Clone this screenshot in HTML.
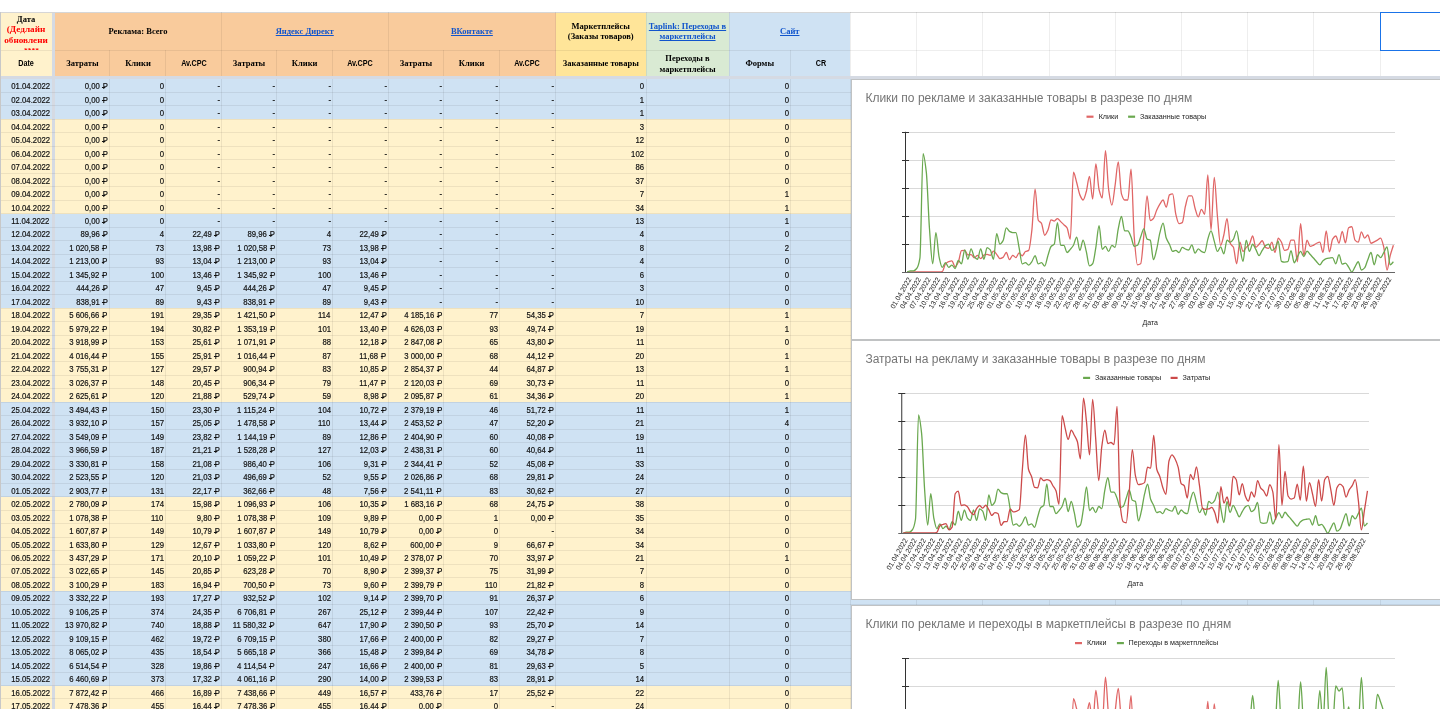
<!DOCTYPE html>
<html><head><meta charset="utf-8"><style>
*{margin:0;padding:0;box-sizing:border-box}
html,body{width:1440px;height:720px;overflow:hidden;background:#fff}
body{position:relative;font-family:"Liberation Sans",sans-serif}
.t{position:absolute;white-space:nowrap;font-size:9px;line-height:10px;color:#111;-webkit-text-stroke:0.2px #111;transform:scaleX(0.86);transform-origin:100% 50%}
.hs{position:absolute;white-space:nowrap;font-family:"Liberation Serif",serif;font-weight:bold;font-size:8.5px;line-height:10.5px;color:#000;text-align:center}
.hb{position:absolute;white-space:nowrap;font-family:"Liberation Sans",sans-serif;font-weight:bold;font-size:9px;line-height:10.5px;color:#000;text-align:center;transform:scaleX(0.8)}
.lk{color:#1155cc;text-decoration:underline;text-decoration-skip-ink:none}
.gl{position:absolute;background:rgba(0,0,0,0.065)}
.rb{position:relative;margin-left:0.8px}.rb:after{content:'';position:absolute;left:-0.4px;width:3.4px;top:5.5px;height:0.75px;background:#111}</style></head>
<body>
<div style="position:absolute;left:0px;top:12px;width:52px;height:38px;background:#fff2cc"></div><div style="position:absolute;left:55px;top:12px;width:166px;height:38px;background:#f9cb9c"></div><div style="position:absolute;left:221px;top:12px;width:167px;height:38px;background:#f9cb9c"></div><div style="position:absolute;left:388px;top:12px;width:168px;height:38px;background:#f9cb9c"></div><div style="position:absolute;left:556px;top:12px;width:90px;height:38px;background:#ffe599"></div><div style="position:absolute;left:646px;top:12px;width:83px;height:38px;background:#d9ead3"></div><div style="position:absolute;left:729px;top:12px;width:121px;height:38px;background:#cfe2f3"></div><div style="position:absolute;left:0px;top:50px;width:52px;height:26px;background:#fff2cc"></div><div style="position:absolute;left:55px;top:50px;width:501px;height:26px;background:#f9cb9c"></div><div style="position:absolute;left:556px;top:50px;width:90px;height:26px;background:#ffe599"></div><div style="position:absolute;left:646px;top:50px;width:83px;height:26px;background:#d9ead3"></div><div style="position:absolute;left:729px;top:50px;width:121px;height:26px;background:#cfe2f3"></div><div style="position:absolute;left:0px;top:79px;width:52px;height:13px;background:#cfe2f3"></div><div style="position:absolute;left:55px;top:79px;width:1385px;height:13px;background:#cfe2f3"></div><div style="position:absolute;left:0px;top:92px;width:52px;height:14px;background:#cfe2f3"></div><div style="position:absolute;left:55px;top:92px;width:1385px;height:14px;background:#cfe2f3"></div><div style="position:absolute;left:0px;top:106px;width:52px;height:13px;background:#cfe2f3"></div><div style="position:absolute;left:55px;top:106px;width:1385px;height:13px;background:#cfe2f3"></div><div style="position:absolute;left:0px;top:119px;width:52px;height:14px;background:#fff2cc"></div><div style="position:absolute;left:55px;top:119px;width:1385px;height:14px;background:#fff2cc"></div><div style="position:absolute;left:0px;top:133px;width:52px;height:13px;background:#fff2cc"></div><div style="position:absolute;left:55px;top:133px;width:1385px;height:13px;background:#fff2cc"></div><div style="position:absolute;left:0px;top:146px;width:52px;height:14px;background:#fff2cc"></div><div style="position:absolute;left:55px;top:146px;width:1385px;height:14px;background:#fff2cc"></div><div style="position:absolute;left:0px;top:160px;width:52px;height:13px;background:#fff2cc"></div><div style="position:absolute;left:55px;top:160px;width:1385px;height:13px;background:#fff2cc"></div><div style="position:absolute;left:0px;top:173px;width:52px;height:14px;background:#fff2cc"></div><div style="position:absolute;left:55px;top:173px;width:1385px;height:14px;background:#fff2cc"></div><div style="position:absolute;left:0px;top:187px;width:52px;height:13px;background:#fff2cc"></div><div style="position:absolute;left:55px;top:187px;width:1385px;height:13px;background:#fff2cc"></div><div style="position:absolute;left:0px;top:200px;width:52px;height:14px;background:#fff2cc"></div><div style="position:absolute;left:55px;top:200px;width:1385px;height:14px;background:#fff2cc"></div><div style="position:absolute;left:0px;top:214px;width:52px;height:13px;background:#cfe2f3"></div><div style="position:absolute;left:55px;top:214px;width:1385px;height:13px;background:#cfe2f3"></div><div style="position:absolute;left:0px;top:227px;width:52px;height:14px;background:#cfe2f3"></div><div style="position:absolute;left:55px;top:227px;width:1385px;height:14px;background:#cfe2f3"></div><div style="position:absolute;left:0px;top:241px;width:52px;height:13px;background:#cfe2f3"></div><div style="position:absolute;left:55px;top:241px;width:1385px;height:13px;background:#cfe2f3"></div><div style="position:absolute;left:0px;top:254px;width:52px;height:14px;background:#cfe2f3"></div><div style="position:absolute;left:55px;top:254px;width:1385px;height:14px;background:#cfe2f3"></div><div style="position:absolute;left:0px;top:268px;width:52px;height:13px;background:#cfe2f3"></div><div style="position:absolute;left:55px;top:268px;width:1385px;height:13px;background:#cfe2f3"></div><div style="position:absolute;left:0px;top:281px;width:52px;height:14px;background:#cfe2f3"></div><div style="position:absolute;left:55px;top:281px;width:1385px;height:14px;background:#cfe2f3"></div><div style="position:absolute;left:0px;top:295px;width:52px;height:13px;background:#cfe2f3"></div><div style="position:absolute;left:55px;top:295px;width:1385px;height:13px;background:#cfe2f3"></div><div style="position:absolute;left:0px;top:308px;width:52px;height:14px;background:#fff2cc"></div><div style="position:absolute;left:55px;top:308px;width:1385px;height:14px;background:#fff2cc"></div><div style="position:absolute;left:0px;top:322px;width:52px;height:13px;background:#fff2cc"></div><div style="position:absolute;left:55px;top:322px;width:1385px;height:13px;background:#fff2cc"></div><div style="position:absolute;left:0px;top:335px;width:52px;height:13px;background:#fff2cc"></div><div style="position:absolute;left:55px;top:335px;width:1385px;height:13px;background:#fff2cc"></div><div style="position:absolute;left:0px;top:348px;width:52px;height:14px;background:#fff2cc"></div><div style="position:absolute;left:55px;top:348px;width:1385px;height:14px;background:#fff2cc"></div><div style="position:absolute;left:0px;top:362px;width:52px;height:13px;background:#fff2cc"></div><div style="position:absolute;left:55px;top:362px;width:1385px;height:13px;background:#fff2cc"></div><div style="position:absolute;left:0px;top:375px;width:52px;height:14px;background:#fff2cc"></div><div style="position:absolute;left:55px;top:375px;width:1385px;height:14px;background:#fff2cc"></div><div style="position:absolute;left:0px;top:389px;width:52px;height:13px;background:#fff2cc"></div><div style="position:absolute;left:55px;top:389px;width:1385px;height:13px;background:#fff2cc"></div><div style="position:absolute;left:0px;top:402px;width:52px;height:14px;background:#cfe2f3"></div><div style="position:absolute;left:55px;top:402px;width:1385px;height:14px;background:#cfe2f3"></div><div style="position:absolute;left:0px;top:416px;width:52px;height:13px;background:#cfe2f3"></div><div style="position:absolute;left:55px;top:416px;width:1385px;height:13px;background:#cfe2f3"></div><div style="position:absolute;left:0px;top:429px;width:52px;height:14px;background:#cfe2f3"></div><div style="position:absolute;left:55px;top:429px;width:1385px;height:14px;background:#cfe2f3"></div><div style="position:absolute;left:0px;top:443px;width:52px;height:13px;background:#cfe2f3"></div><div style="position:absolute;left:55px;top:443px;width:1385px;height:13px;background:#cfe2f3"></div><div style="position:absolute;left:0px;top:456px;width:52px;height:14px;background:#cfe2f3"></div><div style="position:absolute;left:55px;top:456px;width:1385px;height:14px;background:#cfe2f3"></div><div style="position:absolute;left:0px;top:470px;width:52px;height:13px;background:#cfe2f3"></div><div style="position:absolute;left:55px;top:470px;width:1385px;height:13px;background:#cfe2f3"></div><div style="position:absolute;left:0px;top:483px;width:52px;height:14px;background:#cfe2f3"></div><div style="position:absolute;left:55px;top:483px;width:1385px;height:14px;background:#cfe2f3"></div><div style="position:absolute;left:0px;top:497px;width:52px;height:13px;background:#fff2cc"></div><div style="position:absolute;left:55px;top:497px;width:1385px;height:13px;background:#fff2cc"></div><div style="position:absolute;left:0px;top:510px;width:52px;height:14px;background:#fff2cc"></div><div style="position:absolute;left:55px;top:510px;width:1385px;height:14px;background:#fff2cc"></div><div style="position:absolute;left:0px;top:524px;width:52px;height:13px;background:#fff2cc"></div><div style="position:absolute;left:55px;top:524px;width:1385px;height:13px;background:#fff2cc"></div><div style="position:absolute;left:0px;top:537px;width:52px;height:14px;background:#fff2cc"></div><div style="position:absolute;left:55px;top:537px;width:1385px;height:14px;background:#fff2cc"></div><div style="position:absolute;left:0px;top:551px;width:52px;height:13px;background:#fff2cc"></div><div style="position:absolute;left:55px;top:551px;width:1385px;height:13px;background:#fff2cc"></div><div style="position:absolute;left:0px;top:564px;width:52px;height:14px;background:#fff2cc"></div><div style="position:absolute;left:55px;top:564px;width:1385px;height:14px;background:#fff2cc"></div><div style="position:absolute;left:0px;top:578px;width:52px;height:13px;background:#fff2cc"></div><div style="position:absolute;left:55px;top:578px;width:1385px;height:13px;background:#fff2cc"></div><div style="position:absolute;left:0px;top:591px;width:52px;height:14px;background:#cfe2f3"></div><div style="position:absolute;left:55px;top:591px;width:1385px;height:14px;background:#cfe2f3"></div><div style="position:absolute;left:0px;top:605px;width:52px;height:13px;background:#cfe2f3"></div><div style="position:absolute;left:55px;top:605px;width:1385px;height:13px;background:#cfe2f3"></div><div style="position:absolute;left:0px;top:618px;width:52px;height:14px;background:#cfe2f3"></div><div style="position:absolute;left:55px;top:618px;width:1385px;height:14px;background:#cfe2f3"></div><div style="position:absolute;left:0px;top:632px;width:52px;height:13px;background:#cfe2f3"></div><div style="position:absolute;left:55px;top:632px;width:1385px;height:13px;background:#cfe2f3"></div><div style="position:absolute;left:0px;top:645px;width:52px;height:14px;background:#cfe2f3"></div><div style="position:absolute;left:55px;top:645px;width:1385px;height:14px;background:#cfe2f3"></div><div style="position:absolute;left:0px;top:659px;width:52px;height:13px;background:#cfe2f3"></div><div style="position:absolute;left:55px;top:659px;width:1385px;height:13px;background:#cfe2f3"></div><div style="position:absolute;left:0px;top:672px;width:52px;height:14px;background:#cfe2f3"></div><div style="position:absolute;left:55px;top:672px;width:1385px;height:14px;background:#cfe2f3"></div><div style="position:absolute;left:0px;top:686px;width:52px;height:13px;background:#fff2cc"></div><div style="position:absolute;left:55px;top:686px;width:1385px;height:13px;background:#fff2cc"></div><div style="position:absolute;left:0px;top:699px;width:52px;height:10px;background:#fff2cc"></div><div style="position:absolute;left:55px;top:699px;width:1385px;height:10px;background:#fff2cc"></div><div style="position:absolute;left:52px;top:12px;width:3px;height:697px;background:#d5dae3"></div><div style="position:absolute;left:0px;top:76px;width:1440px;height:3px;background:#d5dae3"></div><div class="gl" style="left:0;top:11.50px;width:1440px;height:1px;background:#d6d6d6"></div><div class="gl" style="left:0;top:49.90px;width:51.9px;height:1px"></div><div class="gl" style="left:54.6px;top:49.90px;width:1386px;height:1px"></div><div class="gl" style="left:0;top:91.88px;width:1440px;height:1px"></div><div class="gl" style="left:0;top:105.36px;width:1440px;height:1px"></div><div class="gl" style="left:0;top:118.84px;width:1440px;height:1px"></div><div class="gl" style="left:0;top:132.32px;width:1440px;height:1px"></div><div class="gl" style="left:0;top:145.80px;width:1440px;height:1px"></div><div class="gl" style="left:0;top:159.28px;width:1440px;height:1px"></div><div class="gl" style="left:0;top:172.76px;width:1440px;height:1px"></div><div class="gl" style="left:0;top:186.24px;width:1440px;height:1px"></div><div class="gl" style="left:0;top:199.72px;width:1440px;height:1px"></div><div class="gl" style="left:0;top:213.20px;width:1440px;height:1px"></div><div class="gl" style="left:0;top:226.68px;width:1440px;height:1px"></div><div class="gl" style="left:0;top:240.16px;width:1440px;height:1px"></div><div class="gl" style="left:0;top:253.64px;width:1440px;height:1px"></div><div class="gl" style="left:0;top:267.12px;width:1440px;height:1px"></div><div class="gl" style="left:0;top:280.60px;width:1440px;height:1px"></div><div class="gl" style="left:0;top:294.08px;width:1440px;height:1px"></div><div class="gl" style="left:0;top:307.56px;width:1440px;height:1px"></div><div class="gl" style="left:0;top:321.04px;width:1440px;height:1px"></div><div class="gl" style="left:0;top:334.52px;width:1440px;height:1px"></div><div class="gl" style="left:0;top:348.00px;width:1440px;height:1px"></div><div class="gl" style="left:0;top:361.48px;width:1440px;height:1px"></div><div class="gl" style="left:0;top:374.96px;width:1440px;height:1px"></div><div class="gl" style="left:0;top:388.44px;width:1440px;height:1px"></div><div class="gl" style="left:0;top:401.92px;width:1440px;height:1px"></div><div class="gl" style="left:0;top:415.40px;width:1440px;height:1px"></div><div class="gl" style="left:0;top:428.88px;width:1440px;height:1px"></div><div class="gl" style="left:0;top:442.36px;width:1440px;height:1px"></div><div class="gl" style="left:0;top:455.84px;width:1440px;height:1px"></div><div class="gl" style="left:0;top:469.32px;width:1440px;height:1px"></div><div class="gl" style="left:0;top:482.80px;width:1440px;height:1px"></div><div class="gl" style="left:0;top:496.28px;width:1440px;height:1px"></div><div class="gl" style="left:0;top:509.76px;width:1440px;height:1px"></div><div class="gl" style="left:0;top:523.24px;width:1440px;height:1px"></div><div class="gl" style="left:0;top:536.72px;width:1440px;height:1px"></div><div class="gl" style="left:0;top:550.20px;width:1440px;height:1px"></div><div class="gl" style="left:0;top:563.68px;width:1440px;height:1px"></div><div class="gl" style="left:0;top:577.16px;width:1440px;height:1px"></div><div class="gl" style="left:0;top:590.64px;width:1440px;height:1px"></div><div class="gl" style="left:0;top:604.12px;width:1440px;height:1px"></div><div class="gl" style="left:0;top:617.60px;width:1440px;height:1px"></div><div class="gl" style="left:0;top:631.08px;width:1440px;height:1px"></div><div class="gl" style="left:0;top:644.56px;width:1440px;height:1px"></div><div class="gl" style="left:0;top:658.04px;width:1440px;height:1px"></div><div class="gl" style="left:0;top:671.52px;width:1440px;height:1px"></div><div class="gl" style="left:0;top:685.00px;width:1440px;height:1px"></div><div class="gl" style="left:0;top:698.48px;width:1440px;height:1px"></div><div class="gl" style="left:220.75px;top:12.00px;width:1px;height:38.40px"></div><div class="gl" style="left:387.75px;top:12.00px;width:1px;height:38.40px"></div><div class="gl" style="left:555.00px;top:12.00px;width:1px;height:38.40px"></div><div class="gl" style="left:645.50px;top:12.00px;width:1px;height:38.40px"></div><div class="gl" style="left:728.50px;top:12.00px;width:1px;height:38.40px"></div><div class="gl" style="left:850.00px;top:12.00px;width:1px;height:38.40px"></div><div class="gl" style="left:916.20px;top:12.00px;width:1px;height:38.40px"></div><div class="gl" style="left:982.40px;top:12.00px;width:1px;height:38.40px"></div><div class="gl" style="left:1048.60px;top:12.00px;width:1px;height:38.40px"></div><div class="gl" style="left:1114.80px;top:12.00px;width:1px;height:38.40px"></div><div class="gl" style="left:1181.00px;top:12.00px;width:1px;height:38.40px"></div><div class="gl" style="left:1247.20px;top:12.00px;width:1px;height:38.40px"></div><div class="gl" style="left:1313.40px;top:12.00px;width:1px;height:38.40px"></div><div class="gl" style="left:1379.60px;top:12.00px;width:1px;height:38.40px"></div><div class="gl" style="left:1445.80px;top:12.00px;width:1px;height:38.40px"></div><div class="gl" style="left:108.90px;top:50.40px;width:1px;height:26.10px"></div><div class="gl" style="left:108.90px;top:78.90px;width:1px;height:629.85px"></div><div class="gl" style="left:165.20px;top:50.40px;width:1px;height:26.10px"></div><div class="gl" style="left:165.20px;top:78.90px;width:1px;height:629.85px"></div><div class="gl" style="left:220.75px;top:50.40px;width:1px;height:26.10px"></div><div class="gl" style="left:220.75px;top:78.90px;width:1px;height:629.85px"></div><div class="gl" style="left:276.25px;top:50.40px;width:1px;height:26.10px"></div><div class="gl" style="left:276.25px;top:78.90px;width:1px;height:629.85px"></div><div class="gl" style="left:332.00px;top:50.40px;width:1px;height:26.10px"></div><div class="gl" style="left:332.00px;top:78.90px;width:1px;height:629.85px"></div><div class="gl" style="left:387.75px;top:50.40px;width:1px;height:26.10px"></div><div class="gl" style="left:387.75px;top:78.90px;width:1px;height:629.85px"></div><div class="gl" style="left:443.25px;top:50.40px;width:1px;height:26.10px"></div><div class="gl" style="left:443.25px;top:78.90px;width:1px;height:629.85px"></div><div class="gl" style="left:499.00px;top:50.40px;width:1px;height:26.10px"></div><div class="gl" style="left:499.00px;top:78.90px;width:1px;height:629.85px"></div><div class="gl" style="left:555.00px;top:50.40px;width:1px;height:26.10px"></div><div class="gl" style="left:555.00px;top:78.90px;width:1px;height:629.85px"></div><div class="gl" style="left:645.50px;top:50.40px;width:1px;height:26.10px"></div><div class="gl" style="left:645.50px;top:78.90px;width:1px;height:629.85px"></div><div class="gl" style="left:728.50px;top:50.40px;width:1px;height:26.10px"></div><div class="gl" style="left:728.50px;top:78.90px;width:1px;height:629.85px"></div><div class="gl" style="left:790.00px;top:50.40px;width:1px;height:26.10px"></div><div class="gl" style="left:790.00px;top:78.90px;width:1px;height:629.85px"></div><div class="gl" style="left:850.00px;top:50.40px;width:1px;height:26.10px"></div><div class="gl" style="left:850.00px;top:78.90px;width:1px;height:629.85px"></div><div class="gl" style="left:916.20px;top:50.40px;width:1px;height:26.10px"></div><div class="gl" style="left:916.20px;top:78.90px;width:1px;height:629.85px"></div><div class="gl" style="left:982.40px;top:50.40px;width:1px;height:26.10px"></div><div class="gl" style="left:982.40px;top:78.90px;width:1px;height:629.85px"></div><div class="gl" style="left:1048.60px;top:50.40px;width:1px;height:26.10px"></div><div class="gl" style="left:1048.60px;top:78.90px;width:1px;height:629.85px"></div><div class="gl" style="left:1114.80px;top:50.40px;width:1px;height:26.10px"></div><div class="gl" style="left:1114.80px;top:78.90px;width:1px;height:629.85px"></div><div class="gl" style="left:1181.00px;top:50.40px;width:1px;height:26.10px"></div><div class="gl" style="left:1181.00px;top:78.90px;width:1px;height:629.85px"></div><div class="gl" style="left:1247.20px;top:50.40px;width:1px;height:26.10px"></div><div class="gl" style="left:1247.20px;top:78.90px;width:1px;height:629.85px"></div><div class="gl" style="left:1313.40px;top:50.40px;width:1px;height:26.10px"></div><div class="gl" style="left:1313.40px;top:78.90px;width:1px;height:629.85px"></div><div class="gl" style="left:1379.60px;top:50.40px;width:1px;height:26.10px"></div><div class="gl" style="left:1379.60px;top:78.90px;width:1px;height:629.85px"></div><div class="gl" style="left:1445.80px;top:50.40px;width:1px;height:26.10px"></div><div class="gl" style="left:1445.80px;top:78.90px;width:1px;height:629.85px"></div><div class="gl" style="left:0;top:12.00px;width:1px;height:696.75px;background:#c8c8c8"></div><div style="position:absolute;left:1379.9px;top:11.9px;width:80px;height:38.9px;border:1.4px solid #1a73e8"></div><div style="position:absolute;left:0;top:0;width:1440px;height:720px;will-change:transform"><div class="hs" style="left:-74.00px;top:14.25px;width:200px;">Дата</div><div class="hs" style="left:-74px;top:23.9px;width:200px;color:#ff0000;font-size:9.2px;line-height:11.4px;height:26.5px;overflow:hidden">(Дедлайн<br>обновлени</div><div style="position:absolute;left:0;top:44px;width:52px;height:6.4px;overflow:hidden"><div class="hs" style="left:-68.5px;top:2.6px;width:200px;color:#ff0000;font-size:7.5px;line-height:10px">****</div></div><div class="hs" style="left:38.00px;top:25.95px;width:200px;">Реклама: Всего</div><div class="hs" style="left:204.75px;top:25.95px;width:200px;"><span class="lk">Яндекс Директ</span></div><div class="hs" style="left:371.90px;top:25.95px;width:200px;"><span class="lk">ВКонтакте</span></div><div class="hs" style="left:500.75px;top:20.95px;width:200px;">Маркетплейсы</div><div class="hs" style="left:500.75px;top:31.25px;width:200px;">(Заказы товаров)</div><div class="hs" style="left:587.50px;top:20.95px;width:200px;"><span class="lk">Taplink: Переходы в</span></div><div class="hs" style="left:587.50px;top:31.25px;width:200px;"><span class="lk">маркетплейсы</span></div><div class="hs" style="left:689.75px;top:25.95px;width:200px;"><span class="lk">Сайт</span></div><div class="hb" style="left:-74.00px;top:58.25px;width:200px;">Date</div><div class="hs" style="left:-17.60px;top:58.25px;width:200px;">Затраты</div><div class="hs" style="left:38.00px;top:58.25px;width:200px;">Клики</div><div class="hb" style="left:93.60px;top:58.25px;width:200px;">Av.CPC</div><div class="hs" style="left:149.05px;top:58.25px;width:200px;">Затраты</div><div class="hs" style="left:204.65px;top:58.25px;width:200px;">Клики</div><div class="hb" style="left:260.25px;top:58.25px;width:200px;">Av.CPC</div><div class="hs" style="left:316.05px;top:58.25px;width:200px;">Затраты</div><div class="hs" style="left:371.65px;top:58.25px;width:200px;">Клики</div><div class="hb" style="left:427.25px;top:58.25px;width:200px;">Av.CPC</div><div class="hs" style="left:500.75px;top:58.25px;width:200px;">Заказанные товары</div><div class="hs" style="left:587.50px;top:53.25px;width:200px;">Переходы в</div><div class="hs" style="left:587.50px;top:63.55px;width:200px;">маркетплейсы</div><div class="hs" style="left:659.75px;top:58.25px;width:200px;">Формы</div><div class="hb" style="left:720.50px;top:58.25px;width:200px;">CR</div><div class="t" style="right:1390.40px;top:81.20px">01.04.2022</div><div class="t" style="right:1332.40px;top:81.20px">0,00 <span class="rb">Р</span></div><div class="t" style="right:1276.40px;top:81.20px">0</div><div class="t" style="right:1220.50px;top:81.20px">-</div><div class="t" style="right:1165.00px;top:81.20px">-</div><div class="t" style="right:1109.20px;top:81.20px">-</div><div class="t" style="right:1053.50px;top:81.20px">-</div><div class="t" style="right:998.00px;top:81.20px">-</div><div class="t" style="right:942.40px;top:81.20px">-</div><div class="t" style="right:886.40px;top:81.20px">-</div><div class="t" style="right:795.80px;top:81.20px">0</div><div class="t" style="right:651.40px;top:81.20px">0</div><div class="t" style="right:1390.40px;top:94.68px">02.04.2022</div><div class="t" style="right:1332.40px;top:94.68px">0,00 <span class="rb">Р</span></div><div class="t" style="right:1276.40px;top:94.68px">0</div><div class="t" style="right:1220.50px;top:94.68px">-</div><div class="t" style="right:1165.00px;top:94.68px">-</div><div class="t" style="right:1109.20px;top:94.68px">-</div><div class="t" style="right:1053.50px;top:94.68px">-</div><div class="t" style="right:998.00px;top:94.68px">-</div><div class="t" style="right:942.40px;top:94.68px">-</div><div class="t" style="right:886.40px;top:94.68px">-</div><div class="t" style="right:795.80px;top:94.68px">1</div><div class="t" style="right:651.40px;top:94.68px">0</div><div class="t" style="right:1390.40px;top:108.16px">03.04.2022</div><div class="t" style="right:1332.40px;top:108.16px">0,00 <span class="rb">Р</span></div><div class="t" style="right:1276.40px;top:108.16px">0</div><div class="t" style="right:1220.50px;top:108.16px">-</div><div class="t" style="right:1165.00px;top:108.16px">-</div><div class="t" style="right:1109.20px;top:108.16px">-</div><div class="t" style="right:1053.50px;top:108.16px">-</div><div class="t" style="right:998.00px;top:108.16px">-</div><div class="t" style="right:942.40px;top:108.16px">-</div><div class="t" style="right:886.40px;top:108.16px">-</div><div class="t" style="right:795.80px;top:108.16px">1</div><div class="t" style="right:651.40px;top:108.16px">0</div><div class="t" style="right:1390.40px;top:121.64px">04.04.2022</div><div class="t" style="right:1332.40px;top:121.64px">0,00 <span class="rb">Р</span></div><div class="t" style="right:1276.40px;top:121.64px">0</div><div class="t" style="right:1220.50px;top:121.64px">-</div><div class="t" style="right:1165.00px;top:121.64px">-</div><div class="t" style="right:1109.20px;top:121.64px">-</div><div class="t" style="right:1053.50px;top:121.64px">-</div><div class="t" style="right:998.00px;top:121.64px">-</div><div class="t" style="right:942.40px;top:121.64px">-</div><div class="t" style="right:886.40px;top:121.64px">-</div><div class="t" style="right:795.80px;top:121.64px">3</div><div class="t" style="right:651.40px;top:121.64px">0</div><div class="t" style="right:1390.40px;top:135.12px">05.04.2022</div><div class="t" style="right:1332.40px;top:135.12px">0,00 <span class="rb">Р</span></div><div class="t" style="right:1276.40px;top:135.12px">0</div><div class="t" style="right:1220.50px;top:135.12px">-</div><div class="t" style="right:1165.00px;top:135.12px">-</div><div class="t" style="right:1109.20px;top:135.12px">-</div><div class="t" style="right:1053.50px;top:135.12px">-</div><div class="t" style="right:998.00px;top:135.12px">-</div><div class="t" style="right:942.40px;top:135.12px">-</div><div class="t" style="right:886.40px;top:135.12px">-</div><div class="t" style="right:795.80px;top:135.12px">12</div><div class="t" style="right:651.40px;top:135.12px">0</div><div class="t" style="right:1390.40px;top:148.60px">06.04.2022</div><div class="t" style="right:1332.40px;top:148.60px">0,00 <span class="rb">Р</span></div><div class="t" style="right:1276.40px;top:148.60px">0</div><div class="t" style="right:1220.50px;top:148.60px">-</div><div class="t" style="right:1165.00px;top:148.60px">-</div><div class="t" style="right:1109.20px;top:148.60px">-</div><div class="t" style="right:1053.50px;top:148.60px">-</div><div class="t" style="right:998.00px;top:148.60px">-</div><div class="t" style="right:942.40px;top:148.60px">-</div><div class="t" style="right:886.40px;top:148.60px">-</div><div class="t" style="right:795.80px;top:148.60px">102</div><div class="t" style="right:651.40px;top:148.60px">0</div><div class="t" style="right:1390.40px;top:162.08px">07.04.2022</div><div class="t" style="right:1332.40px;top:162.08px">0,00 <span class="rb">Р</span></div><div class="t" style="right:1276.40px;top:162.08px">0</div><div class="t" style="right:1220.50px;top:162.08px">-</div><div class="t" style="right:1165.00px;top:162.08px">-</div><div class="t" style="right:1109.20px;top:162.08px">-</div><div class="t" style="right:1053.50px;top:162.08px">-</div><div class="t" style="right:998.00px;top:162.08px">-</div><div class="t" style="right:942.40px;top:162.08px">-</div><div class="t" style="right:886.40px;top:162.08px">-</div><div class="t" style="right:795.80px;top:162.08px">86</div><div class="t" style="right:651.40px;top:162.08px">0</div><div class="t" style="right:1390.40px;top:175.56px">08.04.2022</div><div class="t" style="right:1332.40px;top:175.56px">0,00 <span class="rb">Р</span></div><div class="t" style="right:1276.40px;top:175.56px">0</div><div class="t" style="right:1220.50px;top:175.56px">-</div><div class="t" style="right:1165.00px;top:175.56px">-</div><div class="t" style="right:1109.20px;top:175.56px">-</div><div class="t" style="right:1053.50px;top:175.56px">-</div><div class="t" style="right:998.00px;top:175.56px">-</div><div class="t" style="right:942.40px;top:175.56px">-</div><div class="t" style="right:886.40px;top:175.56px">-</div><div class="t" style="right:795.80px;top:175.56px">37</div><div class="t" style="right:651.40px;top:175.56px">0</div><div class="t" style="right:1390.40px;top:189.04px">09.04.2022</div><div class="t" style="right:1332.40px;top:189.04px">0,00 <span class="rb">Р</span></div><div class="t" style="right:1276.40px;top:189.04px">0</div><div class="t" style="right:1220.50px;top:189.04px">-</div><div class="t" style="right:1165.00px;top:189.04px">-</div><div class="t" style="right:1109.20px;top:189.04px">-</div><div class="t" style="right:1053.50px;top:189.04px">-</div><div class="t" style="right:998.00px;top:189.04px">-</div><div class="t" style="right:942.40px;top:189.04px">-</div><div class="t" style="right:886.40px;top:189.04px">-</div><div class="t" style="right:795.80px;top:189.04px">7</div><div class="t" style="right:651.40px;top:189.04px">1</div><div class="t" style="right:1390.40px;top:202.52px">10.04.2022</div><div class="t" style="right:1332.40px;top:202.52px">0,00 <span class="rb">Р</span></div><div class="t" style="right:1276.40px;top:202.52px">0</div><div class="t" style="right:1220.50px;top:202.52px">-</div><div class="t" style="right:1165.00px;top:202.52px">-</div><div class="t" style="right:1109.20px;top:202.52px">-</div><div class="t" style="right:1053.50px;top:202.52px">-</div><div class="t" style="right:998.00px;top:202.52px">-</div><div class="t" style="right:942.40px;top:202.52px">-</div><div class="t" style="right:886.40px;top:202.52px">-</div><div class="t" style="right:795.80px;top:202.52px">34</div><div class="t" style="right:651.40px;top:202.52px">1</div><div class="t" style="right:1390.40px;top:216.00px">11.04.2022</div><div class="t" style="right:1332.40px;top:216.00px">0,00 <span class="rb">Р</span></div><div class="t" style="right:1276.40px;top:216.00px">0</div><div class="t" style="right:1220.50px;top:216.00px">-</div><div class="t" style="right:1165.00px;top:216.00px">-</div><div class="t" style="right:1109.20px;top:216.00px">-</div><div class="t" style="right:1053.50px;top:216.00px">-</div><div class="t" style="right:998.00px;top:216.00px">-</div><div class="t" style="right:942.40px;top:216.00px">-</div><div class="t" style="right:886.40px;top:216.00px">-</div><div class="t" style="right:795.80px;top:216.00px">13</div><div class="t" style="right:651.40px;top:216.00px">1</div><div class="t" style="right:1390.40px;top:229.48px">12.04.2022</div><div class="t" style="right:1332.40px;top:229.48px">89,96 <span class="rb">Р</span></div><div class="t" style="right:1276.40px;top:229.48px">4</div><div class="t" style="right:1220.50px;top:229.48px">22,49 <span class="rb">Р</span></div><div class="t" style="right:1165.00px;top:229.48px">89,96 <span class="rb">Р</span></div><div class="t" style="right:1109.20px;top:229.48px">4</div><div class="t" style="right:1053.50px;top:229.48px">22,49 <span class="rb">Р</span></div><div class="t" style="right:998.00px;top:229.48px">-</div><div class="t" style="right:942.40px;top:229.48px">-</div><div class="t" style="right:886.40px;top:229.48px">-</div><div class="t" style="right:795.80px;top:229.48px">4</div><div class="t" style="right:651.40px;top:229.48px">0</div><div class="t" style="right:1390.40px;top:242.96px">13.04.2022</div><div class="t" style="right:1332.40px;top:242.96px">1 020,58 <span class="rb">Р</span></div><div class="t" style="right:1276.40px;top:242.96px">73</div><div class="t" style="right:1220.50px;top:242.96px">13,98 <span class="rb">Р</span></div><div class="t" style="right:1165.00px;top:242.96px">1 020,58 <span class="rb">Р</span></div><div class="t" style="right:1109.20px;top:242.96px">73</div><div class="t" style="right:1053.50px;top:242.96px">13,98 <span class="rb">Р</span></div><div class="t" style="right:998.00px;top:242.96px">-</div><div class="t" style="right:942.40px;top:242.96px">-</div><div class="t" style="right:886.40px;top:242.96px">-</div><div class="t" style="right:795.80px;top:242.96px">8</div><div class="t" style="right:651.40px;top:242.96px">2</div><div class="t" style="right:1390.40px;top:256.44px">14.04.2022</div><div class="t" style="right:1332.40px;top:256.44px">1 213,00 <span class="rb">Р</span></div><div class="t" style="right:1276.40px;top:256.44px">93</div><div class="t" style="right:1220.50px;top:256.44px">13,04 <span class="rb">Р</span></div><div class="t" style="right:1165.00px;top:256.44px">1 213,00 <span class="rb">Р</span></div><div class="t" style="right:1109.20px;top:256.44px">93</div><div class="t" style="right:1053.50px;top:256.44px">13,04 <span class="rb">Р</span></div><div class="t" style="right:998.00px;top:256.44px">-</div><div class="t" style="right:942.40px;top:256.44px">-</div><div class="t" style="right:886.40px;top:256.44px">-</div><div class="t" style="right:795.80px;top:256.44px">4</div><div class="t" style="right:651.40px;top:256.44px">0</div><div class="t" style="right:1390.40px;top:269.92px">15.04.2022</div><div class="t" style="right:1332.40px;top:269.92px">1 345,92 <span class="rb">Р</span></div><div class="t" style="right:1276.40px;top:269.92px">100</div><div class="t" style="right:1220.50px;top:269.92px">13,46 <span class="rb">Р</span></div><div class="t" style="right:1165.00px;top:269.92px">1 345,92 <span class="rb">Р</span></div><div class="t" style="right:1109.20px;top:269.92px">100</div><div class="t" style="right:1053.50px;top:269.92px">13,46 <span class="rb">Р</span></div><div class="t" style="right:998.00px;top:269.92px">-</div><div class="t" style="right:942.40px;top:269.92px">-</div><div class="t" style="right:886.40px;top:269.92px">-</div><div class="t" style="right:795.80px;top:269.92px">6</div><div class="t" style="right:651.40px;top:269.92px">0</div><div class="t" style="right:1390.40px;top:283.40px">16.04.2022</div><div class="t" style="right:1332.40px;top:283.40px">444,26 <span class="rb">Р</span></div><div class="t" style="right:1276.40px;top:283.40px">47</div><div class="t" style="right:1220.50px;top:283.40px">9,45 <span class="rb">Р</span></div><div class="t" style="right:1165.00px;top:283.40px">444,26 <span class="rb">Р</span></div><div class="t" style="right:1109.20px;top:283.40px">47</div><div class="t" style="right:1053.50px;top:283.40px">9,45 <span class="rb">Р</span></div><div class="t" style="right:998.00px;top:283.40px">-</div><div class="t" style="right:942.40px;top:283.40px">-</div><div class="t" style="right:886.40px;top:283.40px">-</div><div class="t" style="right:795.80px;top:283.40px">3</div><div class="t" style="right:651.40px;top:283.40px">0</div><div class="t" style="right:1390.40px;top:296.88px">17.04.2022</div><div class="t" style="right:1332.40px;top:296.88px">838,91 <span class="rb">Р</span></div><div class="t" style="right:1276.40px;top:296.88px">89</div><div class="t" style="right:1220.50px;top:296.88px">9,43 <span class="rb">Р</span></div><div class="t" style="right:1165.00px;top:296.88px">838,91 <span class="rb">Р</span></div><div class="t" style="right:1109.20px;top:296.88px">89</div><div class="t" style="right:1053.50px;top:296.88px">9,43 <span class="rb">Р</span></div><div class="t" style="right:998.00px;top:296.88px">-</div><div class="t" style="right:942.40px;top:296.88px">-</div><div class="t" style="right:886.40px;top:296.88px">-</div><div class="t" style="right:795.80px;top:296.88px">10</div><div class="t" style="right:651.40px;top:296.88px">0</div><div class="t" style="right:1390.40px;top:310.36px">18.04.2022</div><div class="t" style="right:1332.40px;top:310.36px">5 606,66 <span class="rb">Р</span></div><div class="t" style="right:1276.40px;top:310.36px">191</div><div class="t" style="right:1220.50px;top:310.36px">29,35 <span class="rb">Р</span></div><div class="t" style="right:1165.00px;top:310.36px">1 421,50 <span class="rb">Р</span></div><div class="t" style="right:1109.20px;top:310.36px">114</div><div class="t" style="right:1053.50px;top:310.36px">12,47 <span class="rb">Р</span></div><div class="t" style="right:998.00px;top:310.36px">4 185,16 <span class="rb">Р</span></div><div class="t" style="right:942.40px;top:310.36px">77</div><div class="t" style="right:886.40px;top:310.36px">54,35 <span class="rb">Р</span></div><div class="t" style="right:795.80px;top:310.36px">7</div><div class="t" style="right:651.40px;top:310.36px">1</div><div class="t" style="right:1390.40px;top:323.84px">19.04.2022</div><div class="t" style="right:1332.40px;top:323.84px">5 979,22 <span class="rb">Р</span></div><div class="t" style="right:1276.40px;top:323.84px">194</div><div class="t" style="right:1220.50px;top:323.84px">30,82 <span class="rb">Р</span></div><div class="t" style="right:1165.00px;top:323.84px">1 353,19 <span class="rb">Р</span></div><div class="t" style="right:1109.20px;top:323.84px">101</div><div class="t" style="right:1053.50px;top:323.84px">13,40 <span class="rb">Р</span></div><div class="t" style="right:998.00px;top:323.84px">4 626,03 <span class="rb">Р</span></div><div class="t" style="right:942.40px;top:323.84px">93</div><div class="t" style="right:886.40px;top:323.84px">49,74 <span class="rb">Р</span></div><div class="t" style="right:795.80px;top:323.84px">19</div><div class="t" style="right:651.40px;top:323.84px">1</div><div class="t" style="right:1390.40px;top:337.32px">20.04.2022</div><div class="t" style="right:1332.40px;top:337.32px">3 918,99 <span class="rb">Р</span></div><div class="t" style="right:1276.40px;top:337.32px">153</div><div class="t" style="right:1220.50px;top:337.32px">25,61 <span class="rb">Р</span></div><div class="t" style="right:1165.00px;top:337.32px">1 071,91 <span class="rb">Р</span></div><div class="t" style="right:1109.20px;top:337.32px">88</div><div class="t" style="right:1053.50px;top:337.32px">12,18 <span class="rb">Р</span></div><div class="t" style="right:998.00px;top:337.32px">2 847,08 <span class="rb">Р</span></div><div class="t" style="right:942.40px;top:337.32px">65</div><div class="t" style="right:886.40px;top:337.32px">43,80 <span class="rb">Р</span></div><div class="t" style="right:795.80px;top:337.32px">11</div><div class="t" style="right:651.40px;top:337.32px">0</div><div class="t" style="right:1390.40px;top:350.80px">21.04.2022</div><div class="t" style="right:1332.40px;top:350.80px">4 016,44 <span class="rb">Р</span></div><div class="t" style="right:1276.40px;top:350.80px">155</div><div class="t" style="right:1220.50px;top:350.80px">25,91 <span class="rb">Р</span></div><div class="t" style="right:1165.00px;top:350.80px">1 016,44 <span class="rb">Р</span></div><div class="t" style="right:1109.20px;top:350.80px">87</div><div class="t" style="right:1053.50px;top:350.80px">11,68 <span class="rb">Р</span></div><div class="t" style="right:998.00px;top:350.80px">3 000,00 <span class="rb">Р</span></div><div class="t" style="right:942.40px;top:350.80px">68</div><div class="t" style="right:886.40px;top:350.80px">44,12 <span class="rb">Р</span></div><div class="t" style="right:795.80px;top:350.80px">20</div><div class="t" style="right:651.40px;top:350.80px">1</div><div class="t" style="right:1390.40px;top:364.28px">22.04.2022</div><div class="t" style="right:1332.40px;top:364.28px">3 755,31 <span class="rb">Р</span></div><div class="t" style="right:1276.40px;top:364.28px">127</div><div class="t" style="right:1220.50px;top:364.28px">29,57 <span class="rb">Р</span></div><div class="t" style="right:1165.00px;top:364.28px">900,94 <span class="rb">Р</span></div><div class="t" style="right:1109.20px;top:364.28px">83</div><div class="t" style="right:1053.50px;top:364.28px">10,85 <span class="rb">Р</span></div><div class="t" style="right:998.00px;top:364.28px">2 854,37 <span class="rb">Р</span></div><div class="t" style="right:942.40px;top:364.28px">44</div><div class="t" style="right:886.40px;top:364.28px">64,87 <span class="rb">Р</span></div><div class="t" style="right:795.80px;top:364.28px">13</div><div class="t" style="right:651.40px;top:364.28px">1</div><div class="t" style="right:1390.40px;top:377.76px">23.04.2022</div><div class="t" style="right:1332.40px;top:377.76px">3 026,37 <span class="rb">Р</span></div><div class="t" style="right:1276.40px;top:377.76px">148</div><div class="t" style="right:1220.50px;top:377.76px">20,45 <span class="rb">Р</span></div><div class="t" style="right:1165.00px;top:377.76px">906,34 <span class="rb">Р</span></div><div class="t" style="right:1109.20px;top:377.76px">79</div><div class="t" style="right:1053.50px;top:377.76px">11,47 <span class="rb">Р</span></div><div class="t" style="right:998.00px;top:377.76px">2 120,03 <span class="rb">Р</span></div><div class="t" style="right:942.40px;top:377.76px">69</div><div class="t" style="right:886.40px;top:377.76px">30,73 <span class="rb">Р</span></div><div class="t" style="right:795.80px;top:377.76px">11</div><div class="t" style="right:651.40px;top:377.76px">0</div><div class="t" style="right:1390.40px;top:391.24px">24.04.2022</div><div class="t" style="right:1332.40px;top:391.24px">2 625,61 <span class="rb">Р</span></div><div class="t" style="right:1276.40px;top:391.24px">120</div><div class="t" style="right:1220.50px;top:391.24px">21,88 <span class="rb">Р</span></div><div class="t" style="right:1165.00px;top:391.24px">529,74 <span class="rb">Р</span></div><div class="t" style="right:1109.20px;top:391.24px">59</div><div class="t" style="right:1053.50px;top:391.24px">8,98 <span class="rb">Р</span></div><div class="t" style="right:998.00px;top:391.24px">2 095,87 <span class="rb">Р</span></div><div class="t" style="right:942.40px;top:391.24px">61</div><div class="t" style="right:886.40px;top:391.24px">34,36 <span class="rb">Р</span></div><div class="t" style="right:795.80px;top:391.24px">20</div><div class="t" style="right:651.40px;top:391.24px">1</div><div class="t" style="right:1390.40px;top:404.72px">25.04.2022</div><div class="t" style="right:1332.40px;top:404.72px">3 494,43 <span class="rb">Р</span></div><div class="t" style="right:1276.40px;top:404.72px">150</div><div class="t" style="right:1220.50px;top:404.72px">23,30 <span class="rb">Р</span></div><div class="t" style="right:1165.00px;top:404.72px">1 115,24 <span class="rb">Р</span></div><div class="t" style="right:1109.20px;top:404.72px">104</div><div class="t" style="right:1053.50px;top:404.72px">10,72 <span class="rb">Р</span></div><div class="t" style="right:998.00px;top:404.72px">2 379,19 <span class="rb">Р</span></div><div class="t" style="right:942.40px;top:404.72px">46</div><div class="t" style="right:886.40px;top:404.72px">51,72 <span class="rb">Р</span></div><div class="t" style="right:795.80px;top:404.72px">11</div><div class="t" style="right:651.40px;top:404.72px">1</div><div class="t" style="right:1390.40px;top:418.20px">26.04.2022</div><div class="t" style="right:1332.40px;top:418.20px">3 932,10 <span class="rb">Р</span></div><div class="t" style="right:1276.40px;top:418.20px">157</div><div class="t" style="right:1220.50px;top:418.20px">25,05 <span class="rb">Р</span></div><div class="t" style="right:1165.00px;top:418.20px">1 478,58 <span class="rb">Р</span></div><div class="t" style="right:1109.20px;top:418.20px">110</div><div class="t" style="right:1053.50px;top:418.20px">13,44 <span class="rb">Р</span></div><div class="t" style="right:998.00px;top:418.20px">2 453,52 <span class="rb">Р</span></div><div class="t" style="right:942.40px;top:418.20px">47</div><div class="t" style="right:886.40px;top:418.20px">52,20 <span class="rb">Р</span></div><div class="t" style="right:795.80px;top:418.20px">21</div><div class="t" style="right:651.40px;top:418.20px">4</div><div class="t" style="right:1390.40px;top:431.68px">27.04.2022</div><div class="t" style="right:1332.40px;top:431.68px">3 549,09 <span class="rb">Р</span></div><div class="t" style="right:1276.40px;top:431.68px">149</div><div class="t" style="right:1220.50px;top:431.68px">23,82 <span class="rb">Р</span></div><div class="t" style="right:1165.00px;top:431.68px">1 144,19 <span class="rb">Р</span></div><div class="t" style="right:1109.20px;top:431.68px">89</div><div class="t" style="right:1053.50px;top:431.68px">12,86 <span class="rb">Р</span></div><div class="t" style="right:998.00px;top:431.68px">2 404,90 <span class="rb">Р</span></div><div class="t" style="right:942.40px;top:431.68px">60</div><div class="t" style="right:886.40px;top:431.68px">40,08 <span class="rb">Р</span></div><div class="t" style="right:795.80px;top:431.68px">19</div><div class="t" style="right:651.40px;top:431.68px">0</div><div class="t" style="right:1390.40px;top:445.16px">28.04.2022</div><div class="t" style="right:1332.40px;top:445.16px">3 966,59 <span class="rb">Р</span></div><div class="t" style="right:1276.40px;top:445.16px">187</div><div class="t" style="right:1220.50px;top:445.16px">21,21 <span class="rb">Р</span></div><div class="t" style="right:1165.00px;top:445.16px">1 528,28 <span class="rb">Р</span></div><div class="t" style="right:1109.20px;top:445.16px">127</div><div class="t" style="right:1053.50px;top:445.16px">12,03 <span class="rb">Р</span></div><div class="t" style="right:998.00px;top:445.16px">2 438,31 <span class="rb">Р</span></div><div class="t" style="right:942.40px;top:445.16px">60</div><div class="t" style="right:886.40px;top:445.16px">40,64 <span class="rb">Р</span></div><div class="t" style="right:795.80px;top:445.16px">11</div><div class="t" style="right:651.40px;top:445.16px">0</div><div class="t" style="right:1390.40px;top:458.64px">29.04.2022</div><div class="t" style="right:1332.40px;top:458.64px">3 330,81 <span class="rb">Р</span></div><div class="t" style="right:1276.40px;top:458.64px">158</div><div class="t" style="right:1220.50px;top:458.64px">21,08 <span class="rb">Р</span></div><div class="t" style="right:1165.00px;top:458.64px">986,40 <span class="rb">Р</span></div><div class="t" style="right:1109.20px;top:458.64px">106</div><div class="t" style="right:1053.50px;top:458.64px">9,31 <span class="rb">Р</span></div><div class="t" style="right:998.00px;top:458.64px">2 344,41 <span class="rb">Р</span></div><div class="t" style="right:942.40px;top:458.64px">52</div><div class="t" style="right:886.40px;top:458.64px">45,08 <span class="rb">Р</span></div><div class="t" style="right:795.80px;top:458.64px">33</div><div class="t" style="right:651.40px;top:458.64px">0</div><div class="t" style="right:1390.40px;top:472.12px">30.04.2022</div><div class="t" style="right:1332.40px;top:472.12px">2 523,55 <span class="rb">Р</span></div><div class="t" style="right:1276.40px;top:472.12px">120</div><div class="t" style="right:1220.50px;top:472.12px">21,03 <span class="rb">Р</span></div><div class="t" style="right:1165.00px;top:472.12px">496,69 <span class="rb">Р</span></div><div class="t" style="right:1109.20px;top:472.12px">52</div><div class="t" style="right:1053.50px;top:472.12px">9,55 <span class="rb">Р</span></div><div class="t" style="right:998.00px;top:472.12px">2 026,86 <span class="rb">Р</span></div><div class="t" style="right:942.40px;top:472.12px">68</div><div class="t" style="right:886.40px;top:472.12px">29,81 <span class="rb">Р</span></div><div class="t" style="right:795.80px;top:472.12px">24</div><div class="t" style="right:651.40px;top:472.12px">0</div><div class="t" style="right:1390.40px;top:485.60px">01.05.2022</div><div class="t" style="right:1332.40px;top:485.60px">2 903,77 <span class="rb">Р</span></div><div class="t" style="right:1276.40px;top:485.60px">131</div><div class="t" style="right:1220.50px;top:485.60px">22,17 <span class="rb">Р</span></div><div class="t" style="right:1165.00px;top:485.60px">362,66 <span class="rb">Р</span></div><div class="t" style="right:1109.20px;top:485.60px">48</div><div class="t" style="right:1053.50px;top:485.60px">7,56 <span class="rb">Р</span></div><div class="t" style="right:998.00px;top:485.60px">2 541,11 <span class="rb">Р</span></div><div class="t" style="right:942.40px;top:485.60px">83</div><div class="t" style="right:886.40px;top:485.60px">30,62 <span class="rb">Р</span></div><div class="t" style="right:795.80px;top:485.60px">27</div><div class="t" style="right:651.40px;top:485.60px">0</div><div class="t" style="right:1390.40px;top:499.08px">02.05.2022</div><div class="t" style="right:1332.40px;top:499.08px">2 780,09 <span class="rb">Р</span></div><div class="t" style="right:1276.40px;top:499.08px">174</div><div class="t" style="right:1220.50px;top:499.08px">15,98 <span class="rb">Р</span></div><div class="t" style="right:1165.00px;top:499.08px">1 096,93 <span class="rb">Р</span></div><div class="t" style="right:1109.20px;top:499.08px">106</div><div class="t" style="right:1053.50px;top:499.08px">10,35 <span class="rb">Р</span></div><div class="t" style="right:998.00px;top:499.08px">1 683,16 <span class="rb">Р</span></div><div class="t" style="right:942.40px;top:499.08px">68</div><div class="t" style="right:886.40px;top:499.08px">24,75 <span class="rb">Р</span></div><div class="t" style="right:795.80px;top:499.08px">38</div><div class="t" style="right:651.40px;top:499.08px">0</div><div class="t" style="right:1390.40px;top:512.56px">03.05.2022</div><div class="t" style="right:1332.40px;top:512.56px">1 078,38 <span class="rb">Р</span></div><div class="t" style="right:1276.40px;top:512.56px">110</div><div class="t" style="right:1220.50px;top:512.56px">9,80 <span class="rb">Р</span></div><div class="t" style="right:1165.00px;top:512.56px">1 078,38 <span class="rb">Р</span></div><div class="t" style="right:1109.20px;top:512.56px">109</div><div class="t" style="right:1053.50px;top:512.56px">9,89 <span class="rb">Р</span></div><div class="t" style="right:998.00px;top:512.56px">0,00 <span class="rb">Р</span></div><div class="t" style="right:942.40px;top:512.56px">1</div><div class="t" style="right:886.40px;top:512.56px">0,00 <span class="rb">Р</span></div><div class="t" style="right:795.80px;top:512.56px">35</div><div class="t" style="right:651.40px;top:512.56px">0</div><div class="t" style="right:1390.40px;top:526.04px">04.05.2022</div><div class="t" style="right:1332.40px;top:526.04px">1 607,87 <span class="rb">Р</span></div><div class="t" style="right:1276.40px;top:526.04px">149</div><div class="t" style="right:1220.50px;top:526.04px">10,79 <span class="rb">Р</span></div><div class="t" style="right:1165.00px;top:526.04px">1 607,87 <span class="rb">Р</span></div><div class="t" style="right:1109.20px;top:526.04px">149</div><div class="t" style="right:1053.50px;top:526.04px">10,79 <span class="rb">Р</span></div><div class="t" style="right:998.00px;top:526.04px">0,00 <span class="rb">Р</span></div><div class="t" style="right:942.40px;top:526.04px">0</div><div class="t" style="right:886.40px;top:526.04px">-</div><div class="t" style="right:795.80px;top:526.04px">34</div><div class="t" style="right:651.40px;top:526.04px">0</div><div class="t" style="right:1390.40px;top:539.52px">05.05.2022</div><div class="t" style="right:1332.40px;top:539.52px">1 633,80 <span class="rb">Р</span></div><div class="t" style="right:1276.40px;top:539.52px">129</div><div class="t" style="right:1220.50px;top:539.52px">12,67 <span class="rb">Р</span></div><div class="t" style="right:1165.00px;top:539.52px">1 033,80 <span class="rb">Р</span></div><div class="t" style="right:1109.20px;top:539.52px">120</div><div class="t" style="right:1053.50px;top:539.52px">8,62 <span class="rb">Р</span></div><div class="t" style="right:998.00px;top:539.52px">600,00 <span class="rb">Р</span></div><div class="t" style="right:942.40px;top:539.52px">9</div><div class="t" style="right:886.40px;top:539.52px">66,67 <span class="rb">Р</span></div><div class="t" style="right:795.80px;top:539.52px">34</div><div class="t" style="right:651.40px;top:539.52px">0</div><div class="t" style="right:1390.40px;top:553.00px">06.05.2022</div><div class="t" style="right:1332.40px;top:553.00px">3 437,29 <span class="rb">Р</span></div><div class="t" style="right:1276.40px;top:553.00px">171</div><div class="t" style="right:1220.50px;top:553.00px">20,10 <span class="rb">Р</span></div><div class="t" style="right:1165.00px;top:553.00px">1 059,22 <span class="rb">Р</span></div><div class="t" style="right:1109.20px;top:553.00px">101</div><div class="t" style="right:1053.50px;top:553.00px">10,49 <span class="rb">Р</span></div><div class="t" style="right:998.00px;top:553.00px">2 378,07 <span class="rb">Р</span></div><div class="t" style="right:942.40px;top:553.00px">70</div><div class="t" style="right:886.40px;top:553.00px">33,97 <span class="rb">Р</span></div><div class="t" style="right:795.80px;top:553.00px">21</div><div class="t" style="right:651.40px;top:553.00px">1</div><div class="t" style="right:1390.40px;top:566.48px">07.05.2022</div><div class="t" style="right:1332.40px;top:566.48px">3 022,65 <span class="rb">Р</span></div><div class="t" style="right:1276.40px;top:566.48px">145</div><div class="t" style="right:1220.50px;top:566.48px">20,85 <span class="rb">Р</span></div><div class="t" style="right:1165.00px;top:566.48px">623,28 <span class="rb">Р</span></div><div class="t" style="right:1109.20px;top:566.48px">70</div><div class="t" style="right:1053.50px;top:566.48px">8,90 <span class="rb">Р</span></div><div class="t" style="right:998.00px;top:566.48px">2 399,37 <span class="rb">Р</span></div><div class="t" style="right:942.40px;top:566.48px">75</div><div class="t" style="right:886.40px;top:566.48px">31,99 <span class="rb">Р</span></div><div class="t" style="right:795.80px;top:566.48px">7</div><div class="t" style="right:651.40px;top:566.48px">0</div><div class="t" style="right:1390.40px;top:579.96px">08.05.2022</div><div class="t" style="right:1332.40px;top:579.96px">3 100,29 <span class="rb">Р</span></div><div class="t" style="right:1276.40px;top:579.96px">183</div><div class="t" style="right:1220.50px;top:579.96px">16,94 <span class="rb">Р</span></div><div class="t" style="right:1165.00px;top:579.96px">700,50 <span class="rb">Р</span></div><div class="t" style="right:1109.20px;top:579.96px">73</div><div class="t" style="right:1053.50px;top:579.96px">9,60 <span class="rb">Р</span></div><div class="t" style="right:998.00px;top:579.96px">2 399,79 <span class="rb">Р</span></div><div class="t" style="right:942.40px;top:579.96px">110</div><div class="t" style="right:886.40px;top:579.96px">21,82 <span class="rb">Р</span></div><div class="t" style="right:795.80px;top:579.96px">8</div><div class="t" style="right:651.40px;top:579.96px">0</div><div class="t" style="right:1390.40px;top:593.44px">09.05.2022</div><div class="t" style="right:1332.40px;top:593.44px">3 332,22 <span class="rb">Р</span></div><div class="t" style="right:1276.40px;top:593.44px">193</div><div class="t" style="right:1220.50px;top:593.44px">17,27 <span class="rb">Р</span></div><div class="t" style="right:1165.00px;top:593.44px">932,52 <span class="rb">Р</span></div><div class="t" style="right:1109.20px;top:593.44px">102</div><div class="t" style="right:1053.50px;top:593.44px">9,14 <span class="rb">Р</span></div><div class="t" style="right:998.00px;top:593.44px">2 399,70 <span class="rb">Р</span></div><div class="t" style="right:942.40px;top:593.44px">91</div><div class="t" style="right:886.40px;top:593.44px">26,37 <span class="rb">Р</span></div><div class="t" style="right:795.80px;top:593.44px">6</div><div class="t" style="right:651.40px;top:593.44px">0</div><div class="t" style="right:1390.40px;top:606.92px">10.05.2022</div><div class="t" style="right:1332.40px;top:606.92px">9 106,25 <span class="rb">Р</span></div><div class="t" style="right:1276.40px;top:606.92px">374</div><div class="t" style="right:1220.50px;top:606.92px">24,35 <span class="rb">Р</span></div><div class="t" style="right:1165.00px;top:606.92px">6 706,81 <span class="rb">Р</span></div><div class="t" style="right:1109.20px;top:606.92px">267</div><div class="t" style="right:1053.50px;top:606.92px">25,12 <span class="rb">Р</span></div><div class="t" style="right:998.00px;top:606.92px">2 399,44 <span class="rb">Р</span></div><div class="t" style="right:942.40px;top:606.92px">107</div><div class="t" style="right:886.40px;top:606.92px">22,42 <span class="rb">Р</span></div><div class="t" style="right:795.80px;top:606.92px">9</div><div class="t" style="right:651.40px;top:606.92px">0</div><div class="t" style="right:1390.40px;top:620.40px">11.05.2022</div><div class="t" style="right:1332.40px;top:620.40px">13 970,82 <span class="rb">Р</span></div><div class="t" style="right:1276.40px;top:620.40px">740</div><div class="t" style="right:1220.50px;top:620.40px">18,88 <span class="rb">Р</span></div><div class="t" style="right:1165.00px;top:620.40px">11 580,32 <span class="rb">Р</span></div><div class="t" style="right:1109.20px;top:620.40px">647</div><div class="t" style="right:1053.50px;top:620.40px">17,90 <span class="rb">Р</span></div><div class="t" style="right:998.00px;top:620.40px">2 390,50 <span class="rb">Р</span></div><div class="t" style="right:942.40px;top:620.40px">93</div><div class="t" style="right:886.40px;top:620.40px">25,70 <span class="rb">Р</span></div><div class="t" style="right:795.80px;top:620.40px">14</div><div class="t" style="right:651.40px;top:620.40px">0</div><div class="t" style="right:1390.40px;top:633.88px">12.05.2022</div><div class="t" style="right:1332.40px;top:633.88px">9 109,15 <span class="rb">Р</span></div><div class="t" style="right:1276.40px;top:633.88px">462</div><div class="t" style="right:1220.50px;top:633.88px">19,72 <span class="rb">Р</span></div><div class="t" style="right:1165.00px;top:633.88px">6 709,15 <span class="rb">Р</span></div><div class="t" style="right:1109.20px;top:633.88px">380</div><div class="t" style="right:1053.50px;top:633.88px">17,66 <span class="rb">Р</span></div><div class="t" style="right:998.00px;top:633.88px">2 400,00 <span class="rb">Р</span></div><div class="t" style="right:942.40px;top:633.88px">82</div><div class="t" style="right:886.40px;top:633.88px">29,27 <span class="rb">Р</span></div><div class="t" style="right:795.80px;top:633.88px">7</div><div class="t" style="right:651.40px;top:633.88px">0</div><div class="t" style="right:1390.40px;top:647.36px">13.05.2022</div><div class="t" style="right:1332.40px;top:647.36px">8 065,02 <span class="rb">Р</span></div><div class="t" style="right:1276.40px;top:647.36px">435</div><div class="t" style="right:1220.50px;top:647.36px">18,54 <span class="rb">Р</span></div><div class="t" style="right:1165.00px;top:647.36px">5 665,18 <span class="rb">Р</span></div><div class="t" style="right:1109.20px;top:647.36px">366</div><div class="t" style="right:1053.50px;top:647.36px">15,48 <span class="rb">Р</span></div><div class="t" style="right:998.00px;top:647.36px">2 399,84 <span class="rb">Р</span></div><div class="t" style="right:942.40px;top:647.36px">69</div><div class="t" style="right:886.40px;top:647.36px">34,78 <span class="rb">Р</span></div><div class="t" style="right:795.80px;top:647.36px">8</div><div class="t" style="right:651.40px;top:647.36px">0</div><div class="t" style="right:1390.40px;top:660.84px">14.05.2022</div><div class="t" style="right:1332.40px;top:660.84px">6 514,54 <span class="rb">Р</span></div><div class="t" style="right:1276.40px;top:660.84px">328</div><div class="t" style="right:1220.50px;top:660.84px">19,86 <span class="rb">Р</span></div><div class="t" style="right:1165.00px;top:660.84px">4 114,54 <span class="rb">Р</span></div><div class="t" style="right:1109.20px;top:660.84px">247</div><div class="t" style="right:1053.50px;top:660.84px">16,66 <span class="rb">Р</span></div><div class="t" style="right:998.00px;top:660.84px">2 400,00 <span class="rb">Р</span></div><div class="t" style="right:942.40px;top:660.84px">81</div><div class="t" style="right:886.40px;top:660.84px">29,63 <span class="rb">Р</span></div><div class="t" style="right:795.80px;top:660.84px">5</div><div class="t" style="right:651.40px;top:660.84px">0</div><div class="t" style="right:1390.40px;top:674.32px">15.05.2022</div><div class="t" style="right:1332.40px;top:674.32px">6 460,69 <span class="rb">Р</span></div><div class="t" style="right:1276.40px;top:674.32px">373</div><div class="t" style="right:1220.50px;top:674.32px">17,32 <span class="rb">Р</span></div><div class="t" style="right:1165.00px;top:674.32px">4 061,16 <span class="rb">Р</span></div><div class="t" style="right:1109.20px;top:674.32px">290</div><div class="t" style="right:1053.50px;top:674.32px">14,00 <span class="rb">Р</span></div><div class="t" style="right:998.00px;top:674.32px">2 399,53 <span class="rb">Р</span></div><div class="t" style="right:942.40px;top:674.32px">83</div><div class="t" style="right:886.40px;top:674.32px">28,91 <span class="rb">Р</span></div><div class="t" style="right:795.80px;top:674.32px">14</div><div class="t" style="right:651.40px;top:674.32px">0</div><div class="t" style="right:1390.40px;top:687.80px">16.05.2022</div><div class="t" style="right:1332.40px;top:687.80px">7 872,42 <span class="rb">Р</span></div><div class="t" style="right:1276.40px;top:687.80px">466</div><div class="t" style="right:1220.50px;top:687.80px">16,89 <span class="rb">Р</span></div><div class="t" style="right:1165.00px;top:687.80px">7 438,66 <span class="rb">Р</span></div><div class="t" style="right:1109.20px;top:687.80px">449</div><div class="t" style="right:1053.50px;top:687.80px">16,57 <span class="rb">Р</span></div><div class="t" style="right:998.00px;top:687.80px">433,76 <span class="rb">Р</span></div><div class="t" style="right:942.40px;top:687.80px">17</div><div class="t" style="right:886.40px;top:687.80px">25,52 <span class="rb">Р</span></div><div class="t" style="right:795.80px;top:687.80px">22</div><div class="t" style="right:651.40px;top:687.80px">0</div><div class="t" style="right:1390.40px;top:701.28px">17.05.2022</div><div class="t" style="right:1332.40px;top:701.28px">7 478,36 <span class="rb">Р</span></div><div class="t" style="right:1276.40px;top:701.28px">455</div><div class="t" style="right:1220.50px;top:701.28px">16,44 <span class="rb">Р</span></div><div class="t" style="right:1165.00px;top:701.28px">7 478,36 <span class="rb">Р</span></div><div class="t" style="right:1109.20px;top:701.28px">455</div><div class="t" style="right:1053.50px;top:701.28px">16,44 <span class="rb">Р</span></div><div class="t" style="right:998.00px;top:701.28px">0,00 <span class="rb">Р</span></div><div class="t" style="right:942.40px;top:701.28px">0</div><div class="t" style="right:886.40px;top:701.28px">-</div><div class="t" style="right:795.80px;top:701.28px">24</div><div class="t" style="right:651.40px;top:701.28px">0</div></div><div style="position:absolute;left:851px;top:79px;width:600px;height:261px;background:#fff;border:1px solid rgba(60,64,67,0.32);border-right:none"></div><svg style="position:absolute;left:0;top:0;will-change:transform" width="1440" height="720" viewBox="0 0 1440 720" font-family="Liberation Sans, sans-serif"><text x="865.4" y="102.00" font-size="12" fill="#757575">Клики по рекламе и заказанные товары в разрезе по дням</text><rect x="1086.50" y="115.60" width="7" height="2.2" fill="#e06666"/><text x="1098.70" y="118.70" font-size="7.2" fill="#222">Клики</text><rect x="1128.10" y="115.60" width="7" height="2.2" fill="#6aa84f"/><text x="1140.00" y="118.70" font-size="7.2" fill="#222">Заказанные товары</text><line x1="905.50" x2="1395.00" y1="132.50" y2="132.50" stroke="#d9d9d9" stroke-width="1"/><line x1="902.00" x2="909.00" y1="132.50" y2="132.50" stroke="#333" stroke-width="1"/><line x1="905.50" x2="1395.00" y1="160.50" y2="160.50" stroke="#d9d9d9" stroke-width="1"/><line x1="902.00" x2="909.00" y1="160.50" y2="160.50" stroke="#333" stroke-width="1"/><line x1="905.50" x2="1395.00" y1="188.50" y2="188.50" stroke="#d9d9d9" stroke-width="1"/><line x1="902.00" x2="909.00" y1="188.50" y2="188.50" stroke="#333" stroke-width="1"/><line x1="905.50" x2="1395.00" y1="216.50" y2="216.50" stroke="#d9d9d9" stroke-width="1"/><line x1="902.00" x2="909.00" y1="216.50" y2="216.50" stroke="#333" stroke-width="1"/><line x1="905.50" x2="1395.00" y1="244.50" y2="244.50" stroke="#d9d9d9" stroke-width="1"/><line x1="902.00" x2="909.00" y1="244.50" y2="244.50" stroke="#333" stroke-width="1"/><line x1="905.50" x2="905.50" y1="131.80" y2="272.00" stroke="#333" stroke-width="1"/><path d="M907.10,272.00C908.17,272.00 909.23,272.00 910.30,272.00C911.37,272.00 912.43,272.00 913.50,272.00C914.56,272.00 915.63,272.00 916.70,272.00C917.76,272.00 918.83,272.00 919.90,272.00C920.96,272.00 922.03,272.00 923.10,272.00C924.16,272.00 925.23,272.00 926.30,272.00C927.36,272.00 928.43,272.00 929.50,272.00C930.56,272.00 931.63,272.00 932.69,272.00C933.76,272.00 934.83,272.00 935.89,272.00C936.96,272.00 938.03,272.00 939.09,272.00C940.16,272.00 941.23,271.83 942.29,271.55C943.36,271.27 944.43,264.98 945.49,263.83C946.56,262.67 947.62,261.97 948.69,261.59C949.76,261.20 950.82,260.80 951.89,260.80C952.96,260.80 954.02,266.74 955.09,266.74C956.16,266.74 957.22,264.25 958.29,262.03C959.36,259.81 960.42,250.83 961.49,250.61C962.56,250.39 963.62,250.28 964.69,250.28C965.75,250.28 966.82,254.87 967.89,254.87C968.95,254.87 970.02,254.64 971.09,254.64C972.15,254.64 973.22,257.78 974.29,257.78C975.35,257.78 976.42,255.43 977.49,255.43C978.55,255.43 979.62,258.56 980.68,258.56C981.75,258.56 982.82,255.63 983.88,255.20C984.95,254.78 986.02,254.42 987.08,254.42C988.15,254.42 989.22,255.31 990.28,255.31C991.35,255.31 992.42,251.06 993.48,251.06C994.55,251.06 995.61,253.08 996.68,254.31C997.75,255.53 998.81,258.56 999.88,258.56C1000.95,258.56 1002.01,257.98 1003.08,257.33C1004.15,256.68 1005.21,252.52 1006.28,252.52C1007.35,252.52 1008.41,259.68 1009.48,259.68C1010.55,259.68 1011.61,255.31 1012.68,255.31C1013.74,255.31 1014.81,257.55 1015.88,257.55C1016.94,257.55 1018.01,252.85 1019.08,252.85C1020.14,252.85 1021.21,255.76 1022.28,255.76C1023.34,255.76 1024.41,252.10 1025.48,251.51C1026.54,250.92 1027.61,251.09 1028.67,250.39C1029.74,249.68 1030.81,239.16 1031.87,230.12C1032.94,221.08 1034.01,189.13 1035.07,189.13C1036.14,189.13 1037.21,218.43 1038.27,220.26C1039.34,222.10 1040.41,221.68 1041.47,223.29C1042.54,224.90 1043.61,235.27 1044.67,235.27C1045.74,235.27 1046.80,232.49 1047.87,230.23C1048.94,227.97 1050.00,219.82 1051.07,219.82C1052.14,219.82 1053.20,221.05 1054.27,221.05C1055.34,221.05 1056.40,218.53 1057.47,218.53C1058.54,218.53 1059.60,220.59 1060.67,221.62C1061.73,222.65 1062.80,223.68 1063.87,224.71C1064.93,225.74 1066.00,226.18 1067.07,227.79C1068.13,229.41 1069.20,239.11 1070.27,239.11C1071.33,239.11 1072.40,172.24 1073.47,172.24C1074.53,172.24 1075.60,178.79 1076.67,182.53C1077.73,186.27 1078.80,192.45 1079.86,194.87C1080.93,197.29 1082.00,200.02 1083.06,200.02C1084.13,200.02 1085.20,195.36 1086.26,191.79C1087.33,188.21 1088.40,176.35 1089.46,176.35C1090.53,176.35 1091.60,198.99 1092.66,198.99C1093.73,198.99 1094.79,164.01 1095.86,164.01C1096.93,164.01 1097.99,185.57 1099.06,189.73C1100.13,193.89 1101.19,197.96 1102.26,197.96C1103.33,197.96 1104.39,150.63 1105.46,150.63C1106.53,150.63 1107.59,182.35 1108.66,189.73C1109.72,197.10 1110.79,205.16 1111.86,205.16C1112.92,205.16 1113.99,192.75 1115.06,185.61C1116.12,178.48 1117.19,161.95 1118.26,161.95C1119.32,161.95 1120.39,190.40 1121.46,193.84C1122.52,197.29 1123.59,200.02 1124.66,200.02C1125.72,200.02 1126.79,200.02 1127.85,200.02C1128.92,200.02 1129.99,169.15 1131.05,169.15C1132.12,169.15 1133.19,223.91 1134.25,237.05C1135.32,250.20 1136.39,264.83 1137.45,264.83C1138.52,264.83 1139.59,264.46 1140.65,263.80C1141.72,263.14 1142.78,246.05 1143.85,235.00C1144.92,223.94 1145.98,195.90 1147.05,195.90C1148.12,195.90 1149.18,220.59 1150.25,220.59C1151.32,220.59 1152.38,219.63 1153.45,218.53C1154.52,217.44 1155.58,212.66 1156.65,210.30C1157.72,207.95 1158.78,205.78 1159.85,204.13C1160.91,202.49 1161.98,200.02 1163.05,200.02C1164.11,200.02 1165.18,207.22 1166.25,207.22C1167.31,207.22 1168.38,195.51 1169.45,194.87C1170.51,194.24 1171.58,193.84 1172.65,193.84C1173.71,193.84 1174.78,210.16 1175.84,214.42C1176.91,218.68 1177.98,223.68 1179.04,223.68C1180.11,223.68 1181.18,223.30 1182.24,222.65C1183.31,222.00 1184.38,210.41 1185.44,206.19C1186.51,201.97 1187.58,195.90 1188.64,195.90C1189.71,195.90 1190.78,195.90 1191.84,195.90C1192.91,195.90 1193.97,204.86 1195.04,208.25C1196.11,211.64 1197.17,216.89 1198.24,216.89C1199.31,216.89 1200.37,209.28 1201.44,209.28C1202.51,209.28 1203.57,214.42 1204.64,214.42C1205.71,214.42 1206.77,174.91 1207.84,174.91C1208.90,174.91 1209.97,229.85 1211.04,229.85C1212.10,229.85 1213.17,177.38 1214.24,177.38C1215.30,177.38 1216.37,205.42 1217.44,216.48C1218.50,227.53 1219.57,245.28 1220.64,245.28C1221.70,245.28 1222.77,239.22 1223.83,235.00C1224.90,230.78 1225.97,218.53 1227.03,218.53C1228.10,218.53 1229.17,240.87 1230.23,243.23C1231.30,245.58 1232.37,245.15 1233.43,247.34C1234.50,249.54 1235.57,263.80 1236.63,263.80C1237.70,263.80 1238.77,242.20 1239.83,242.20C1240.90,242.20 1241.96,251.46 1243.03,251.46C1244.10,251.46 1245.16,248.52 1246.23,247.34C1247.30,246.17 1248.36,245.75 1249.43,244.26C1250.50,242.76 1251.56,236.02 1252.63,236.02C1253.70,236.02 1254.76,247.34 1255.83,247.34C1256.89,247.34 1257.96,245.35 1259.03,244.26C1260.09,243.16 1261.16,240.76 1262.23,240.76C1263.29,240.76 1264.36,246.75 1265.43,247.34C1266.49,247.93 1267.56,248.37 1268.63,248.37C1269.69,248.37 1270.76,242.20 1271.83,242.20C1272.89,242.20 1273.96,252.49 1275.02,252.49C1276.09,252.49 1277.16,238.08 1278.22,238.08C1279.29,238.08 1280.36,240.37 1281.42,242.20C1282.49,244.03 1283.56,250.43 1284.62,250.43C1285.69,250.43 1286.76,250.02 1287.82,249.40C1288.89,248.78 1289.95,240.14 1291.02,240.14C1292.09,240.14 1293.15,240.14 1294.22,240.14C1295.29,240.14 1296.35,261.74 1297.42,261.74C1298.49,261.74 1299.55,223.68 1300.62,223.68C1301.69,223.68 1302.75,255.57 1303.82,255.57C1304.89,255.57 1305.95,240.14 1307.02,240.14C1308.08,240.14 1309.15,246.31 1310.22,246.31C1311.28,246.31 1312.35,245.74 1313.42,245.28C1314.48,244.83 1315.55,243.68 1316.62,243.23C1317.68,242.77 1318.75,242.20 1319.82,242.20C1320.88,242.20 1321.95,252.49 1323.01,252.49C1324.08,252.49 1325.15,230.88 1326.21,230.88C1327.28,230.88 1328.35,251.87 1329.41,251.87C1330.48,251.87 1331.55,240.77 1332.61,239.11C1333.68,237.45 1334.75,236.02 1335.81,236.02C1336.88,236.02 1337.94,243.23 1339.01,243.23C1340.08,243.23 1341.14,231.29 1342.21,231.29C1343.28,231.29 1344.34,242.81 1345.41,242.81C1346.48,242.81 1347.54,228.44 1348.61,227.79C1349.68,227.15 1350.74,226.77 1351.81,226.77C1352.88,226.77 1353.94,238.95 1355.01,240.14C1356.07,241.33 1357.14,242.20 1358.21,242.20C1359.27,242.20 1360.34,231.91 1361.41,231.91C1362.47,231.91 1363.54,238.08 1364.61,238.08C1365.67,238.08 1366.74,235.00 1367.81,235.00C1368.87,235.00 1369.94,243.23 1371.00,243.23C1372.07,243.23 1373.14,242.30 1374.20,241.79C1375.27,241.27 1376.34,240.75 1377.40,240.14C1378.47,239.53 1379.54,238.08 1380.60,238.08C1381.67,238.08 1382.74,242.96 1383.80,247.34C1384.87,251.72 1385.94,269.98 1387.00,269.98C1388.07,269.98 1389.13,259.57 1390.20,255.57C1391.27,251.57 1392.33,248.71 1393.40,245.28" fill="none" stroke="#e06666" stroke-width="1.3" stroke-linejoin="round"/><path d="M907.10,272.00C908.17,271.61 909.23,270.84 910.30,270.84C911.37,270.84 912.43,270.84 913.50,270.84C914.56,270.84 915.63,269.78 916.70,268.52C917.76,267.25 918.83,264.40 919.90,258.07C920.96,251.74 922.03,153.60 923.10,153.60C924.16,153.60 925.23,162.84 926.30,172.17C927.36,181.51 928.43,214.65 929.50,229.05C930.56,243.45 931.63,263.87 932.69,263.87C933.76,263.87 934.83,232.53 935.89,232.53C936.96,232.53 938.03,252.03 939.09,256.91C940.16,261.79 941.23,267.36 942.29,267.36C943.36,267.36 944.43,262.71 945.49,262.71C946.56,262.71 947.62,267.36 948.69,267.36C949.76,267.36 950.82,265.04 951.89,265.04C952.96,265.04 954.02,268.52 955.09,268.52C956.16,268.52 957.22,260.39 958.29,260.39C959.36,260.39 960.42,263.87 961.49,263.87C962.56,263.87 963.62,249.95 964.69,249.95C965.75,249.95 966.82,259.23 967.89,259.23C968.95,259.23 970.02,248.78 971.09,248.78C972.15,248.78 973.22,255.71 974.29,256.91C975.35,258.11 976.42,259.23 977.49,259.23C978.55,259.23 979.62,248.78 980.68,248.78C981.75,248.78 982.82,259.23 983.88,259.23C984.95,259.23 986.02,247.62 987.08,247.62C988.15,247.62 989.22,248.71 990.28,249.95C991.35,251.18 992.42,259.23 993.48,259.23C994.55,259.23 995.61,233.69 996.68,233.69C997.75,233.69 998.81,244.14 999.88,244.14C1000.95,244.14 1002.01,242.48 1003.08,240.66C1004.15,238.84 1005.21,227.89 1006.28,227.89C1007.35,227.89 1008.41,230.79 1009.48,231.37C1010.55,231.95 1011.61,232.53 1012.68,232.53C1013.74,232.53 1014.81,232.53 1015.88,232.53C1016.94,232.53 1018.01,242.41 1019.08,247.62C1020.14,252.84 1021.21,263.87 1022.28,263.87C1023.34,263.87 1024.41,262.71 1025.48,262.71C1026.54,262.71 1027.61,265.04 1028.67,265.04C1029.74,265.04 1030.81,263.00 1031.87,261.55C1032.94,260.10 1034.01,255.75 1035.07,255.75C1036.14,255.75 1037.21,263.87 1038.27,263.87C1039.34,263.87 1040.41,262.71 1041.47,262.71C1042.54,262.71 1043.61,266.20 1044.67,266.20C1045.74,266.20 1046.80,259.03 1047.87,255.75C1048.94,252.47 1050.00,247.70 1051.07,246.46C1052.14,245.22 1053.20,245.54 1054.27,244.14C1055.34,242.74 1056.40,222.65 1057.47,222.65C1058.54,222.65 1059.60,245.28 1060.67,245.28C1061.73,245.28 1062.80,245.28 1063.87,245.28C1064.93,245.28 1066.00,252.49 1067.07,252.49C1068.13,252.49 1069.20,250.57 1070.27,249.40C1071.33,248.22 1072.40,247.11 1073.47,245.28C1074.53,243.45 1075.60,237.05 1076.67,237.05C1077.73,237.05 1078.80,250.43 1079.86,250.43C1080.93,250.43 1082.00,240.14 1083.06,240.14C1084.13,240.14 1085.20,247.23 1086.26,251.46C1087.33,255.68 1088.40,265.86 1089.46,265.86C1090.53,265.86 1091.60,265.02 1092.66,263.80C1093.73,262.58 1094.79,253.57 1095.86,247.34C1096.93,241.11 1097.99,225.74 1099.06,225.74C1100.13,225.74 1101.19,249.40 1102.26,249.40C1103.33,249.40 1104.39,246.31 1105.46,246.31C1106.53,246.31 1107.59,251.46 1108.66,251.46C1109.72,251.46 1110.79,245.28 1111.86,245.28C1112.92,245.28 1113.99,247.34 1115.06,247.34C1116.12,247.34 1117.19,233.76 1118.26,228.82C1119.32,223.88 1120.39,216.48 1121.46,216.48C1122.52,216.48 1123.59,230.88 1124.66,230.88C1125.72,230.88 1126.79,230.88 1127.85,230.88C1128.92,230.88 1129.99,234.58 1131.05,237.05C1132.12,239.52 1133.19,246.31 1134.25,246.31C1135.32,246.31 1136.39,245.89 1137.45,245.28C1138.52,244.67 1139.59,239.80 1140.65,237.05C1141.72,234.31 1142.78,228.82 1143.85,228.82C1144.92,228.82 1145.98,238.49 1147.05,239.11C1148.12,239.73 1149.18,239.49 1150.25,240.14C1151.32,240.79 1152.38,259.69 1153.45,259.69C1154.52,259.69 1155.58,253.62 1156.65,249.40C1157.72,245.18 1158.78,237.05 1159.85,232.94C1160.91,228.82 1161.98,223.06 1163.05,223.06C1164.11,223.06 1165.18,235.17 1166.25,238.08C1167.31,241.00 1168.38,242.04 1169.45,244.26C1170.51,246.47 1171.58,251.46 1172.65,251.46C1173.71,251.46 1174.78,250.43 1175.84,250.43C1176.91,250.43 1177.98,252.49 1179.04,252.49C1180.11,252.49 1181.18,247.34 1182.24,247.34C1183.31,247.34 1184.38,248.57 1185.44,248.99C1186.51,249.41 1187.58,250.02 1188.64,250.02C1189.71,250.02 1190.78,244.87 1191.84,244.87C1192.91,244.87 1193.97,253.10 1195.04,253.10C1196.11,253.10 1197.17,248.78 1198.24,248.78C1199.31,248.78 1200.37,250.96 1201.44,251.46C1202.51,251.95 1203.57,252.49 1204.64,252.49C1205.71,252.49 1206.77,242.51 1207.84,239.11C1208.90,235.71 1209.97,230.88 1211.04,230.88C1212.10,230.88 1213.17,237.74 1214.24,241.17C1215.30,244.60 1216.37,251.46 1217.44,251.46C1218.50,251.46 1219.57,246.93 1220.64,246.93C1221.70,246.93 1222.77,253.93 1223.83,253.93C1224.90,253.93 1225.97,240.14 1227.03,240.14C1228.10,240.14 1229.17,242.20 1230.23,242.20C1231.30,242.20 1232.37,240.61 1233.43,239.11C1234.50,237.61 1235.57,230.88 1236.63,230.88C1237.70,230.88 1238.77,242.30 1239.83,247.34C1240.90,252.38 1241.96,261.33 1243.03,261.33C1244.10,261.33 1245.16,240.14 1246.23,240.14C1247.30,240.14 1248.36,251.46 1249.43,251.46C1250.50,251.46 1251.56,244.26 1252.63,244.26C1253.70,244.26 1254.76,247.53 1255.83,249.40C1256.89,251.27 1257.96,255.57 1259.03,255.57C1260.09,255.57 1261.16,252.07 1262.23,250.43C1263.29,248.78 1264.36,246.43 1265.43,245.70C1266.49,244.96 1267.56,244.26 1268.63,244.26C1269.69,244.26 1270.76,250.43 1271.83,250.43C1272.89,250.43 1273.96,249.44 1275.02,248.37C1276.09,247.30 1277.16,241.17 1278.22,241.17C1279.29,241.17 1280.36,260.81 1281.42,261.33C1282.49,261.86 1283.56,262.16 1284.62,262.16C1285.69,262.16 1286.76,262.01 1287.82,261.74C1288.89,261.48 1289.95,250.63 1291.02,250.63C1292.09,250.63 1293.15,262.77 1294.22,262.77C1295.29,262.77 1296.35,258.47 1297.42,256.60C1298.49,254.73 1299.55,251.46 1300.62,251.46C1301.69,251.46 1302.75,256.60 1303.82,256.60C1304.89,256.60 1305.95,251.05 1307.02,251.05C1308.08,251.05 1309.15,253.38 1310.22,254.54C1311.28,255.71 1312.35,256.84 1313.42,258.04C1314.48,259.24 1315.55,260.62 1316.62,261.74C1317.68,262.87 1318.75,264.83 1319.82,264.83C1320.88,264.83 1321.95,261.63 1323.01,260.72C1324.08,259.80 1325.15,258.97 1326.21,258.66C1327.28,258.34 1328.35,258.21 1329.41,258.04C1330.48,257.88 1331.55,257.63 1332.61,257.63C1333.68,257.63 1334.75,263.80 1335.81,263.80C1336.88,263.80 1337.94,254.54 1339.01,254.54C1340.08,254.54 1341.14,264.21 1342.21,264.21C1343.28,264.21 1344.34,263.19 1345.41,263.19C1346.48,263.19 1347.54,265.64 1348.61,267.09C1349.68,268.55 1350.74,272.03 1351.81,272.03C1352.88,272.03 1353.94,268.60 1355.01,266.89C1356.07,265.17 1357.14,261.74 1358.21,261.74C1359.27,261.74 1360.34,269.98 1361.41,269.98C1362.47,269.98 1363.54,269.02 1364.61,267.92C1365.67,266.82 1366.74,262.25 1367.81,259.69C1368.87,257.13 1369.94,252.49 1371.00,252.49C1372.07,252.49 1373.14,264.83 1374.20,264.83C1375.27,264.83 1376.34,254.54 1377.40,254.54C1378.47,254.54 1379.54,257.63 1380.60,257.63C1381.67,257.63 1382.74,254.27 1383.80,252.49C1384.87,250.70 1385.94,246.93 1387.00,246.93C1388.07,246.93 1389.13,264.83 1390.20,264.83C1391.27,264.83 1392.33,262.77 1393.40,261.74" fill="none" stroke="#6aa84f" stroke-width="1.3" stroke-linejoin="round"/><line x1="902.00" x2="1395.00" y1="272.50" y2="272.50" stroke="#666" stroke-width="1"/><text x="911.70" y="279.00" font-size="7" fill="#222" text-anchor="end" transform="rotate(-60 911.70 279.00)">01.04.2022</text><text x="921.30" y="279.00" font-size="7" fill="#222" text-anchor="end" transform="rotate(-60 921.30 279.00)">04.04.2022</text><text x="930.90" y="279.00" font-size="7" fill="#222" text-anchor="end" transform="rotate(-60 930.90 279.00)">07.04.2022</text><text x="940.49" y="279.00" font-size="7" fill="#222" text-anchor="end" transform="rotate(-60 940.49 279.00)">10.04.2022</text><text x="950.09" y="279.00" font-size="7" fill="#222" text-anchor="end" transform="rotate(-60 950.09 279.00)">13.04.2022</text><text x="959.69" y="279.00" font-size="7" fill="#222" text-anchor="end" transform="rotate(-60 959.69 279.00)">16.04.2022</text><text x="969.29" y="279.00" font-size="7" fill="#222" text-anchor="end" transform="rotate(-60 969.29 279.00)">19.04.2022</text><text x="978.89" y="279.00" font-size="7" fill="#222" text-anchor="end" transform="rotate(-60 978.89 279.00)">22.04.2022</text><text x="988.48" y="279.00" font-size="7" fill="#222" text-anchor="end" transform="rotate(-60 988.48 279.00)">25.04.2022</text><text x="998.08" y="279.00" font-size="7" fill="#222" text-anchor="end" transform="rotate(-60 998.08 279.00)">28.04.2022</text><text x="1007.68" y="279.00" font-size="7" fill="#222" text-anchor="end" transform="rotate(-60 1007.68 279.00)">01.05.2022</text><text x="1017.28" y="279.00" font-size="7" fill="#222" text-anchor="end" transform="rotate(-60 1017.28 279.00)">04.05.2022</text><text x="1026.88" y="279.00" font-size="7" fill="#222" text-anchor="end" transform="rotate(-60 1026.88 279.00)">07.05.2022</text><text x="1036.47" y="279.00" font-size="7" fill="#222" text-anchor="end" transform="rotate(-60 1036.47 279.00)">10.05.2022</text><text x="1046.07" y="279.00" font-size="7" fill="#222" text-anchor="end" transform="rotate(-60 1046.07 279.00)">13.05.2022</text><text x="1055.67" y="279.00" font-size="7" fill="#222" text-anchor="end" transform="rotate(-60 1055.67 279.00)">16.05.2022</text><text x="1065.27" y="279.00" font-size="7" fill="#222" text-anchor="end" transform="rotate(-60 1065.27 279.00)">19.05.2022</text><text x="1074.87" y="279.00" font-size="7" fill="#222" text-anchor="end" transform="rotate(-60 1074.87 279.00)">22.05.2022</text><text x="1084.46" y="279.00" font-size="7" fill="#222" text-anchor="end" transform="rotate(-60 1084.46 279.00)">25.05.2022</text><text x="1094.06" y="279.00" font-size="7" fill="#222" text-anchor="end" transform="rotate(-60 1094.06 279.00)">28.05.2022</text><text x="1103.66" y="279.00" font-size="7" fill="#222" text-anchor="end" transform="rotate(-60 1103.66 279.00)">31.05.2022</text><text x="1113.26" y="279.00" font-size="7" fill="#222" text-anchor="end" transform="rotate(-60 1113.26 279.00)">03.06.2022</text><text x="1122.86" y="279.00" font-size="7" fill="#222" text-anchor="end" transform="rotate(-60 1122.86 279.00)">06.06.2022</text><text x="1132.45" y="279.00" font-size="7" fill="#222" text-anchor="end" transform="rotate(-60 1132.45 279.00)">09.06.2022</text><text x="1142.05" y="279.00" font-size="7" fill="#222" text-anchor="end" transform="rotate(-60 1142.05 279.00)">12.06.2022</text><text x="1151.65" y="279.00" font-size="7" fill="#222" text-anchor="end" transform="rotate(-60 1151.65 279.00)">15.06.2022</text><text x="1161.25" y="279.00" font-size="7" fill="#222" text-anchor="end" transform="rotate(-60 1161.25 279.00)">18.06.2022</text><text x="1170.85" y="279.00" font-size="7" fill="#222" text-anchor="end" transform="rotate(-60 1170.85 279.00)">21.06.2022</text><text x="1180.44" y="279.00" font-size="7" fill="#222" text-anchor="end" transform="rotate(-60 1180.44 279.00)">24.06.2022</text><text x="1190.04" y="279.00" font-size="7" fill="#222" text-anchor="end" transform="rotate(-60 1190.04 279.00)">27.06.2022</text><text x="1199.64" y="279.00" font-size="7" fill="#222" text-anchor="end" transform="rotate(-60 1199.64 279.00)">30.06.2022</text><text x="1209.24" y="279.00" font-size="7" fill="#222" text-anchor="end" transform="rotate(-60 1209.24 279.00)">03.07.2022</text><text x="1218.84" y="279.00" font-size="7" fill="#222" text-anchor="end" transform="rotate(-60 1218.84 279.00)">06.07.2022</text><text x="1228.43" y="279.00" font-size="7" fill="#222" text-anchor="end" transform="rotate(-60 1228.43 279.00)">09.07.2022</text><text x="1238.03" y="279.00" font-size="7" fill="#222" text-anchor="end" transform="rotate(-60 1238.03 279.00)">12.07.2022</text><text x="1247.63" y="279.00" font-size="7" fill="#222" text-anchor="end" transform="rotate(-60 1247.63 279.00)">15.07.2022</text><text x="1257.23" y="279.00" font-size="7" fill="#222" text-anchor="end" transform="rotate(-60 1257.23 279.00)">18.07.2022</text><text x="1266.83" y="279.00" font-size="7" fill="#222" text-anchor="end" transform="rotate(-60 1266.83 279.00)">21.07.2022</text><text x="1276.43" y="279.00" font-size="7" fill="#222" text-anchor="end" transform="rotate(-60 1276.43 279.00)">24.07.2022</text><text x="1286.02" y="279.00" font-size="7" fill="#222" text-anchor="end" transform="rotate(-60 1286.02 279.00)">27.07.2022</text><text x="1295.62" y="279.00" font-size="7" fill="#222" text-anchor="end" transform="rotate(-60 1295.62 279.00)">30.07.2022</text><text x="1305.22" y="279.00" font-size="7" fill="#222" text-anchor="end" transform="rotate(-60 1305.22 279.00)">02.08.2022</text><text x="1314.82" y="279.00" font-size="7" fill="#222" text-anchor="end" transform="rotate(-60 1314.82 279.00)">05.08.2022</text><text x="1324.42" y="279.00" font-size="7" fill="#222" text-anchor="end" transform="rotate(-60 1324.42 279.00)">08.08.2022</text><text x="1334.01" y="279.00" font-size="7" fill="#222" text-anchor="end" transform="rotate(-60 1334.01 279.00)">11.08.2022</text><text x="1343.61" y="279.00" font-size="7" fill="#222" text-anchor="end" transform="rotate(-60 1343.61 279.00)">14.08.2022</text><text x="1353.21" y="279.00" font-size="7" fill="#222" text-anchor="end" transform="rotate(-60 1353.21 279.00)">17.08.2022</text><text x="1362.81" y="279.00" font-size="7" fill="#222" text-anchor="end" transform="rotate(-60 1362.81 279.00)">20.08.2022</text><text x="1372.41" y="279.00" font-size="7" fill="#222" text-anchor="end" transform="rotate(-60 1372.41 279.00)">23.08.2022</text><text x="1382.00" y="279.00" font-size="7" fill="#222" text-anchor="end" transform="rotate(-60 1382.00 279.00)">26.08.2022</text><text x="1391.60" y="279.00" font-size="7" fill="#222" text-anchor="end" transform="rotate(-60 1391.60 279.00)">29.08.2022</text><text x="1150.25" y="324.80" font-size="7" fill="#222" text-anchor="middle">Дата</text></svg><div style="position:absolute;left:851px;top:340px;width:600px;height:260px;background:#fff;border:1px solid rgba(60,64,67,0.32);border-right:none"></div><svg style="position:absolute;left:0;top:0;will-change:transform" width="1440" height="720" viewBox="0 0 1440 720" font-family="Liberation Sans, sans-serif"><text x="865.4" y="363.20" font-size="12" fill="#757575">Затраты на рекламу и заказанные товары в разрезе по дням</text><rect x="1083.10" y="376.80" width="7" height="2.2" fill="#6aa84f"/><text x="1095.00" y="379.90" font-size="7.2" fill="#222">Заказанные товары</text><rect x="1170.60" y="376.80" width="7" height="2.2" fill="#cc4a4a"/><text x="1182.50" y="379.90" font-size="7.2" fill="#222">Затраты</text><line x1="901.75" x2="1369.00" y1="393.50" y2="393.50" stroke="#d9d9d9" stroke-width="1"/><line x1="898.25" x2="905.25" y1="393.50" y2="393.50" stroke="#333" stroke-width="1"/><line x1="901.75" x2="1369.00" y1="421.50" y2="421.50" stroke="#d9d9d9" stroke-width="1"/><line x1="898.25" x2="905.25" y1="421.50" y2="421.50" stroke="#333" stroke-width="1"/><line x1="901.75" x2="1369.00" y1="449.50" y2="449.50" stroke="#d9d9d9" stroke-width="1"/><line x1="898.25" x2="905.25" y1="449.50" y2="449.50" stroke="#333" stroke-width="1"/><line x1="901.75" x2="1369.00" y1="477.50" y2="477.50" stroke="#d9d9d9" stroke-width="1"/><line x1="898.25" x2="905.25" y1="477.50" y2="477.50" stroke="#333" stroke-width="1"/><line x1="901.75" x2="1369.00" y1="505.50" y2="505.50" stroke="#d9d9d9" stroke-width="1"/><line x1="898.25" x2="905.25" y1="505.50" y2="505.50" stroke="#333" stroke-width="1"/><line x1="901.75" x2="901.75" y1="393.00" y2="533.20" stroke="#333" stroke-width="1"/><path d="M903.28,533.20C904.29,532.81 905.31,532.04 906.33,532.04C907.35,532.04 908.37,532.04 909.38,532.04C910.40,532.04 911.42,530.98 912.44,529.72C913.46,528.45 914.47,525.60 915.49,519.27C916.51,512.94 917.53,414.80 918.55,414.80C919.56,414.80 920.58,424.04 921.60,433.37C922.62,442.71 923.64,475.85 924.65,490.25C925.67,504.65 926.69,525.07 927.71,525.07C928.73,525.07 929.74,493.73 930.76,493.73C931.78,493.73 932.80,513.23 933.82,518.11C934.83,522.99 935.85,528.56 936.87,528.56C937.89,528.56 938.91,523.91 939.92,523.91C940.94,523.91 941.96,528.56 942.98,528.56C944.00,528.56 945.01,526.24 946.03,526.24C947.05,526.24 948.07,529.72 949.09,529.72C950.10,529.72 951.12,521.59 952.14,521.59C953.16,521.59 954.18,525.07 955.19,525.07C956.21,525.07 957.23,511.15 958.25,511.15C959.27,511.15 960.28,520.43 961.30,520.43C962.32,520.43 963.34,509.98 964.36,509.98C965.37,509.98 966.39,516.91 967.41,518.11C968.43,519.31 969.45,520.43 970.46,520.43C971.48,520.43 972.50,509.98 973.52,509.98C974.54,509.98 975.55,520.43 976.57,520.43C977.59,520.43 978.61,508.82 979.62,508.82C980.64,508.82 981.66,509.91 982.68,511.15C983.70,512.38 984.71,520.43 985.73,520.43C986.75,520.43 987.77,494.89 988.79,494.89C989.80,494.89 990.82,505.34 991.84,505.34C992.86,505.34 993.88,503.68 994.89,501.86C995.91,500.04 996.93,489.09 997.95,489.09C998.97,489.09 999.98,491.99 1001.00,492.57C1002.02,493.15 1003.04,493.73 1004.06,493.73C1005.07,493.73 1006.09,493.73 1007.11,493.73C1008.13,493.73 1009.15,503.61 1010.16,508.82C1011.18,514.04 1012.20,525.07 1013.22,525.07C1014.24,525.07 1015.25,523.91 1016.27,523.91C1017.29,523.91 1018.31,526.24 1019.33,526.24C1020.34,526.24 1021.36,524.20 1022.38,522.75C1023.40,521.30 1024.42,516.95 1025.43,516.95C1026.45,516.95 1027.47,525.07 1028.49,525.07C1029.51,525.07 1030.52,523.91 1031.54,523.91C1032.56,523.91 1033.58,527.40 1034.60,527.40C1035.61,527.40 1036.63,520.23 1037.65,516.95C1038.67,513.67 1039.69,508.90 1040.70,507.66C1041.72,506.42 1042.74,506.74 1043.76,505.34C1044.78,503.94 1045.79,483.85 1046.81,483.85C1047.83,483.85 1048.85,506.48 1049.87,506.48C1050.88,506.48 1051.90,506.48 1052.92,506.48C1053.94,506.48 1054.96,513.69 1055.97,513.69C1056.99,513.69 1058.01,511.77 1059.03,510.60C1060.04,509.42 1061.06,508.31 1062.08,506.48C1063.10,504.65 1064.12,498.25 1065.13,498.25C1066.15,498.25 1067.17,511.63 1068.19,511.63C1069.21,511.63 1070.22,501.34 1071.24,501.34C1072.26,501.34 1073.28,508.43 1074.30,512.66C1075.31,516.88 1076.33,527.06 1077.35,527.06C1078.37,527.06 1079.39,526.22 1080.40,525.00C1081.42,523.78 1082.44,514.77 1083.46,508.54C1084.48,502.31 1085.49,486.94 1086.51,486.94C1087.53,486.94 1088.55,510.60 1089.57,510.60C1090.58,510.60 1091.60,507.51 1092.62,507.51C1093.64,507.51 1094.66,512.66 1095.67,512.66C1096.69,512.66 1097.71,506.48 1098.73,506.48C1099.75,506.48 1100.76,508.54 1101.78,508.54C1102.80,508.54 1103.82,494.96 1104.84,490.02C1105.85,485.08 1106.87,477.68 1107.89,477.68C1108.91,477.68 1109.93,492.08 1110.94,492.08C1111.96,492.08 1112.98,492.08 1114.00,492.08C1115.02,492.08 1116.03,495.78 1117.05,498.25C1118.07,500.72 1119.09,507.51 1120.11,507.51C1121.12,507.51 1122.14,507.09 1123.16,506.48C1124.18,505.87 1125.20,501.00 1126.21,498.25C1127.23,495.51 1128.25,490.02 1129.27,490.02C1130.29,490.02 1131.30,499.69 1132.32,500.31C1133.34,500.93 1134.36,500.69 1135.38,501.34C1136.39,501.99 1137.41,520.89 1138.43,520.89C1139.45,520.89 1140.46,514.82 1141.48,510.60C1142.50,506.38 1143.52,498.25 1144.54,494.14C1145.55,490.02 1146.57,484.26 1147.59,484.26C1148.61,484.26 1149.63,496.37 1150.64,499.28C1151.66,502.20 1152.68,503.24 1153.70,505.46C1154.72,507.67 1155.73,512.66 1156.75,512.66C1157.77,512.66 1158.79,511.63 1159.81,511.63C1160.82,511.63 1161.84,513.69 1162.86,513.69C1163.88,513.69 1164.90,508.54 1165.91,508.54C1166.93,508.54 1167.95,509.77 1168.97,510.19C1169.99,510.61 1171.00,511.22 1172.02,511.22C1173.04,511.22 1174.06,506.07 1175.08,506.07C1176.09,506.07 1177.11,514.30 1178.13,514.30C1179.15,514.30 1180.17,509.98 1181.18,509.98C1182.20,509.98 1183.22,512.16 1184.24,512.66C1185.26,513.15 1186.27,513.69 1187.29,513.69C1188.31,513.69 1189.33,503.71 1190.35,500.31C1191.36,496.91 1192.38,492.08 1193.40,492.08C1194.42,492.08 1195.44,498.94 1196.45,502.37C1197.47,505.80 1198.49,512.66 1199.51,512.66C1200.53,512.66 1201.54,508.13 1202.56,508.13C1203.58,508.13 1204.60,515.13 1205.62,515.13C1206.63,515.13 1207.65,501.34 1208.67,501.34C1209.69,501.34 1210.71,503.40 1211.72,503.40C1212.74,503.40 1213.76,501.81 1214.78,500.31C1215.79,498.81 1216.81,492.08 1217.83,492.08C1218.85,492.08 1219.87,503.50 1220.88,508.54C1221.90,513.58 1222.92,522.53 1223.94,522.53C1224.96,522.53 1225.97,501.34 1226.99,501.34C1228.01,501.34 1229.03,512.66 1230.05,512.66C1231.06,512.66 1232.08,505.46 1233.10,505.46C1234.12,505.46 1235.14,508.73 1236.15,510.60C1237.17,512.47 1238.19,516.77 1239.21,516.77C1240.23,516.77 1241.24,513.27 1242.26,511.63C1243.28,509.98 1244.30,507.63 1245.32,506.90C1246.33,506.16 1247.35,505.46 1248.37,505.46C1249.39,505.46 1250.41,511.63 1251.42,511.63C1252.44,511.63 1253.46,510.64 1254.48,509.57C1255.50,508.50 1256.51,502.37 1257.53,502.37C1258.55,502.37 1259.57,522.01 1260.59,522.53C1261.60,523.06 1262.62,523.36 1263.64,523.36C1264.66,523.36 1265.68,523.21 1266.69,522.94C1267.71,522.68 1268.73,511.83 1269.75,511.83C1270.77,511.83 1271.78,523.97 1272.80,523.97C1273.82,523.97 1274.84,519.67 1275.86,517.80C1276.87,515.93 1277.89,512.66 1278.91,512.66C1279.93,512.66 1280.95,517.80 1281.96,517.80C1282.98,517.80 1284.00,512.25 1285.02,512.25C1286.04,512.25 1287.05,514.58 1288.07,515.74C1289.09,516.91 1290.11,518.04 1291.12,519.24C1292.14,520.44 1293.16,521.82 1294.18,522.94C1295.20,524.07 1296.21,526.03 1297.23,526.03C1298.25,526.03 1299.27,522.83 1300.29,521.92C1301.30,521.00 1302.32,520.17 1303.34,519.86C1304.36,519.54 1305.38,519.41 1306.39,519.24C1307.41,519.08 1308.43,518.83 1309.45,518.83C1310.47,518.83 1311.48,525.00 1312.50,525.00C1313.52,525.00 1314.54,515.74 1315.56,515.74C1316.57,515.74 1317.59,525.41 1318.61,525.41C1319.63,525.41 1320.65,524.39 1321.66,524.39C1322.68,524.39 1323.70,526.84 1324.72,528.29C1325.74,529.75 1326.75,533.23 1327.77,533.23C1328.79,533.23 1329.81,529.80 1330.83,528.09C1331.84,526.37 1332.86,522.94 1333.88,522.94C1334.90,522.94 1335.92,531.18 1336.93,531.18C1337.95,531.18 1338.97,530.22 1339.99,529.12C1341.01,528.02 1342.02,523.45 1343.04,520.89C1344.06,518.33 1345.08,513.69 1346.10,513.69C1347.11,513.69 1348.13,526.03 1349.15,526.03C1350.17,526.03 1351.19,515.74 1352.20,515.74C1353.22,515.74 1354.24,518.83 1355.26,518.83C1356.28,518.83 1357.29,515.47 1358.31,513.69C1359.33,511.90 1360.35,508.13 1361.37,508.13C1362.38,508.13 1363.40,526.03 1364.42,526.03C1365.44,526.03 1366.46,523.97 1367.47,522.94" fill="none" stroke="#6aa84f" stroke-width="1.3" stroke-linejoin="round"/><path d="M903.28,533.00C904.29,533.00 905.31,533.00 906.33,533.00C907.35,533.00 908.37,533.00 909.38,533.00C910.40,533.00 911.42,533.00 912.44,533.00C913.46,533.00 914.47,533.00 915.49,533.00C916.51,533.00 917.53,533.00 918.55,533.00C919.56,533.00 920.58,533.00 921.60,533.00C922.62,533.00 923.64,533.00 924.65,533.00C925.67,533.00 926.69,533.00 927.71,533.00C928.73,533.00 929.74,533.00 930.76,533.00C931.78,533.00 932.80,533.00 933.82,533.00C934.83,533.00 935.85,532.75 936.87,532.37C937.89,531.99 938.91,526.60 939.92,525.86C940.94,525.11 941.96,524.88 942.98,524.51C944.00,524.14 945.01,523.58 946.03,523.58C947.05,523.58 948.07,529.89 949.09,529.89C950.10,529.89 951.12,528.83 952.14,527.13C953.16,525.43 954.18,495.37 955.19,493.75C956.21,492.14 957.23,491.15 958.25,491.15C959.27,491.15 960.28,505.57 961.30,505.57C962.32,505.57 963.34,504.89 964.36,504.89C965.37,504.89 966.39,505.82 967.41,506.71C968.43,507.61 969.45,510.61 970.46,511.82C971.48,513.02 972.50,514.62 973.52,514.62C974.54,514.62 975.55,509.90 976.57,508.54C977.59,507.18 978.61,505.48 979.62,505.48C980.64,505.48 981.66,508.16 982.68,508.16C983.70,508.16 984.71,505.23 985.73,505.23C986.75,505.23 987.77,508.03 988.79,509.68C989.80,511.34 990.82,515.34 991.84,515.34C992.86,515.34 993.88,512.67 994.89,512.67C995.91,512.67 996.93,513.00 997.95,513.54C998.97,514.08 999.98,525.45 1001.00,525.45C1002.02,525.45 1003.04,521.86 1004.06,521.75C1005.07,521.63 1006.09,521.68 1007.11,521.56C1008.13,521.44 1009.15,508.94 1010.16,508.94C1011.18,508.94 1012.20,511.84 1013.22,511.84C1014.24,511.84 1015.25,511.57 1016.27,511.30C1017.29,511.03 1018.31,510.72 1019.33,509.67C1020.34,508.63 1021.36,481.58 1022.38,469.26C1023.40,456.94 1024.42,435.21 1025.43,435.21C1026.45,435.21 1027.47,465.23 1028.49,469.24C1029.51,473.25 1030.52,473.63 1031.54,476.55C1032.56,479.46 1033.58,487.16 1034.60,487.40C1035.61,487.64 1036.63,487.78 1037.65,487.78C1038.67,487.78 1039.69,477.89 1040.70,477.89C1041.72,477.89 1042.74,480.65 1043.76,480.65C1044.78,480.65 1045.79,479.53 1046.81,479.53C1047.83,479.53 1048.85,479.99 1049.87,480.56C1050.88,481.14 1051.90,483.99 1052.92,485.71C1053.94,487.42 1054.96,488.38 1055.97,490.85C1056.99,493.33 1058.01,504.23 1059.03,504.23C1060.04,504.23 1061.06,415.75 1062.08,415.75C1063.10,415.75 1064.12,424.16 1065.13,428.09C1066.15,432.03 1067.17,439.41 1068.19,439.41C1069.21,439.41 1070.22,430.15 1071.24,430.15C1072.26,430.15 1073.28,433.43 1074.30,435.30C1075.31,437.17 1076.33,438.43 1077.35,441.47C1078.37,444.51 1079.39,458.96 1080.40,458.96C1081.42,458.96 1082.44,398.26 1083.46,398.26C1084.48,398.26 1085.49,412.74 1086.51,421.92C1087.53,431.10 1088.55,454.84 1089.57,454.84C1090.58,454.84 1091.60,399.29 1092.62,399.29C1093.64,399.29 1094.66,424.86 1095.67,438.38C1096.69,451.91 1097.71,480.56 1098.73,480.56C1099.75,480.56 1100.76,454.00 1101.78,446.61C1102.80,439.22 1103.82,430.15 1104.84,430.15C1105.85,430.15 1106.87,443.53 1107.89,443.53C1108.91,443.53 1109.93,442.50 1110.94,442.50C1111.96,442.50 1112.98,444.56 1114.00,444.56C1115.02,444.56 1116.03,406.49 1117.05,406.49C1118.07,406.49 1119.09,494.34 1120.11,504.23C1121.12,514.12 1122.14,521.07 1123.16,521.72C1124.18,522.36 1125.20,522.74 1126.21,522.74C1127.23,522.74 1128.25,503.76 1129.27,491.88C1130.29,480.00 1131.30,449.70 1132.32,449.70C1133.34,449.70 1134.36,470.88 1135.38,475.42C1136.39,479.96 1137.41,484.68 1138.43,484.68C1139.45,484.68 1140.46,484.35 1141.48,484.06C1142.50,483.77 1143.52,483.50 1144.54,482.62C1145.55,481.74 1146.57,467.19 1147.59,467.19C1148.61,467.19 1149.63,468.22 1150.64,468.22C1151.66,468.22 1152.68,435.30 1153.70,435.30C1154.72,435.30 1155.73,465.29 1156.75,469.25C1157.77,473.21 1158.79,473.51 1159.81,476.45C1160.82,479.38 1161.84,484.99 1162.86,487.77C1163.88,490.54 1164.90,494.35 1165.91,494.35C1166.93,494.35 1167.95,464.49 1168.97,461.02C1169.99,457.54 1171.00,454.84 1172.02,454.84C1173.04,454.84 1174.06,457.13 1175.08,458.96C1176.09,460.79 1177.11,463.53 1178.13,467.19C1179.15,470.85 1180.17,482.43 1181.18,483.65C1182.20,484.87 1183.22,484.53 1184.24,485.71C1185.26,486.88 1186.27,498.05 1187.29,498.05C1188.31,498.05 1189.33,474.39 1190.35,474.39C1191.36,474.39 1192.38,479.53 1193.40,479.53C1194.42,479.53 1195.44,466.78 1196.45,466.78C1197.47,466.78 1198.49,478.84 1199.51,485.71C1200.53,492.58 1201.54,507.69 1202.56,508.34C1203.58,509.00 1204.60,509.37 1205.62,509.37C1206.63,509.37 1207.65,509.18 1208.67,508.96C1209.69,508.74 1210.71,507.31 1211.72,507.31C1212.74,507.31 1213.76,510.14 1214.78,512.46C1215.79,514.77 1216.81,523.16 1217.83,523.16C1218.85,523.16 1219.87,486.74 1220.88,486.74C1221.90,486.74 1222.92,503.20 1223.94,503.20C1224.96,503.20 1225.97,497.02 1226.99,497.02C1228.01,497.02 1229.03,506.28 1230.05,506.28C1231.06,506.28 1232.08,476.45 1233.10,476.45C1234.12,476.45 1235.14,477.82 1236.15,479.53C1237.17,481.25 1238.19,494.97 1239.21,494.97C1240.23,494.97 1241.24,483.65 1242.26,483.65C1243.28,483.65 1244.30,493.58 1245.32,496.00C1246.33,498.42 1247.35,501.14 1248.37,501.14C1249.39,501.14 1250.41,491.88 1251.42,491.88C1252.44,491.88 1253.46,497.02 1254.48,497.02C1255.50,497.02 1256.51,480.56 1257.53,480.56C1258.55,480.56 1259.57,486.33 1260.59,487.77C1261.60,489.21 1262.62,489.57 1263.64,490.85C1264.66,492.14 1265.68,496.00 1266.69,496.00C1267.71,496.00 1268.73,484.68 1269.75,484.68C1270.77,484.68 1271.78,488.07 1272.80,491.88C1273.82,495.69 1274.84,519.66 1275.86,519.66C1276.87,519.66 1277.89,444.56 1278.91,444.56C1279.93,444.56 1280.95,505.26 1281.96,505.26C1282.98,505.26 1284.00,471.30 1285.02,471.30C1286.04,471.30 1287.05,494.17 1288.07,496.00C1289.09,497.82 1290.11,499.08 1291.12,499.08C1292.14,499.08 1293.16,498.69 1294.18,498.05C1295.20,497.41 1296.21,484.06 1297.23,484.06C1298.25,484.06 1299.27,500.11 1300.29,500.11C1301.30,500.11 1302.32,466.16 1303.34,466.16C1304.36,466.16 1305.38,501.14 1306.39,501.14C1307.41,501.14 1308.43,482.62 1309.45,482.62C1310.47,482.62 1311.48,490.00 1312.50,493.94C1313.52,497.87 1314.54,506.28 1315.56,506.28C1316.57,506.28 1317.59,479.53 1318.61,479.53C1319.63,479.53 1320.65,501.14 1321.66,501.14C1322.68,501.14 1323.70,481.34 1324.72,479.53C1325.74,477.73 1326.75,476.45 1327.77,476.45C1328.79,476.45 1329.81,485.05 1330.83,489.82C1331.84,494.60 1332.86,505.26 1333.88,505.26C1334.90,505.26 1335.92,489.80 1336.93,487.77C1337.95,485.73 1338.97,484.06 1339.99,484.06C1341.01,484.06 1342.02,485.32 1343.04,486.74C1344.06,488.15 1345.08,497.02 1346.10,497.02C1347.11,497.02 1348.13,491.57 1349.15,489.82C1350.17,488.08 1351.19,487.35 1352.20,485.71C1353.22,484.06 1354.24,479.53 1355.26,479.53C1356.28,479.53 1357.29,491.99 1358.31,500.11C1359.33,508.23 1360.35,529.95 1361.37,529.95C1362.38,529.95 1363.40,516.91 1364.42,510.40C1365.44,503.88 1366.46,497.37 1367.47,490.85" fill="none" stroke="#cc4a4a" stroke-width="1.3" stroke-linejoin="round"/><line x1="898.25" x2="1369.00" y1="533.50" y2="533.50" stroke="#666" stroke-width="1"/><text x="907.88" y="540.20" font-size="7" fill="#222" text-anchor="end" transform="rotate(-60 907.88 540.20)">01.04.2022</text><text x="917.04" y="540.20" font-size="7" fill="#222" text-anchor="end" transform="rotate(-60 917.04 540.20)">04.04.2022</text><text x="926.20" y="540.20" font-size="7" fill="#222" text-anchor="end" transform="rotate(-60 926.20 540.20)">07.04.2022</text><text x="935.36" y="540.20" font-size="7" fill="#222" text-anchor="end" transform="rotate(-60 935.36 540.20)">10.04.2022</text><text x="944.52" y="540.20" font-size="7" fill="#222" text-anchor="end" transform="rotate(-60 944.52 540.20)">13.04.2022</text><text x="953.69" y="540.20" font-size="7" fill="#222" text-anchor="end" transform="rotate(-60 953.69 540.20)">16.04.2022</text><text x="962.85" y="540.20" font-size="7" fill="#222" text-anchor="end" transform="rotate(-60 962.85 540.20)">19.04.2022</text><text x="972.01" y="540.20" font-size="7" fill="#222" text-anchor="end" transform="rotate(-60 972.01 540.20)">22.04.2022</text><text x="981.17" y="540.20" font-size="7" fill="#222" text-anchor="end" transform="rotate(-60 981.17 540.20)">25.04.2022</text><text x="990.33" y="540.20" font-size="7" fill="#222" text-anchor="end" transform="rotate(-60 990.33 540.20)">28.04.2022</text><text x="999.49" y="540.20" font-size="7" fill="#222" text-anchor="end" transform="rotate(-60 999.49 540.20)">01.05.2022</text><text x="1008.66" y="540.20" font-size="7" fill="#222" text-anchor="end" transform="rotate(-60 1008.66 540.20)">04.05.2022</text><text x="1017.82" y="540.20" font-size="7" fill="#222" text-anchor="end" transform="rotate(-60 1017.82 540.20)">07.05.2022</text><text x="1026.98" y="540.20" font-size="7" fill="#222" text-anchor="end" transform="rotate(-60 1026.98 540.20)">10.05.2022</text><text x="1036.14" y="540.20" font-size="7" fill="#222" text-anchor="end" transform="rotate(-60 1036.14 540.20)">13.05.2022</text><text x="1045.30" y="540.20" font-size="7" fill="#222" text-anchor="end" transform="rotate(-60 1045.30 540.20)">16.05.2022</text><text x="1054.47" y="540.20" font-size="7" fill="#222" text-anchor="end" transform="rotate(-60 1054.47 540.20)">19.05.2022</text><text x="1063.63" y="540.20" font-size="7" fill="#222" text-anchor="end" transform="rotate(-60 1063.63 540.20)">22.05.2022</text><text x="1072.79" y="540.20" font-size="7" fill="#222" text-anchor="end" transform="rotate(-60 1072.79 540.20)">25.05.2022</text><text x="1081.95" y="540.20" font-size="7" fill="#222" text-anchor="end" transform="rotate(-60 1081.95 540.20)">28.05.2022</text><text x="1091.11" y="540.20" font-size="7" fill="#222" text-anchor="end" transform="rotate(-60 1091.11 540.20)">31.05.2022</text><text x="1100.27" y="540.20" font-size="7" fill="#222" text-anchor="end" transform="rotate(-60 1100.27 540.20)">03.06.2022</text><text x="1109.44" y="540.20" font-size="7" fill="#222" text-anchor="end" transform="rotate(-60 1109.44 540.20)">06.06.2022</text><text x="1118.60" y="540.20" font-size="7" fill="#222" text-anchor="end" transform="rotate(-60 1118.60 540.20)">09.06.2022</text><text x="1127.76" y="540.20" font-size="7" fill="#222" text-anchor="end" transform="rotate(-60 1127.76 540.20)">12.06.2022</text><text x="1136.92" y="540.20" font-size="7" fill="#222" text-anchor="end" transform="rotate(-60 1136.92 540.20)">15.06.2022</text><text x="1146.08" y="540.20" font-size="7" fill="#222" text-anchor="end" transform="rotate(-60 1146.08 540.20)">18.06.2022</text><text x="1155.24" y="540.20" font-size="7" fill="#222" text-anchor="end" transform="rotate(-60 1155.24 540.20)">21.06.2022</text><text x="1164.41" y="540.20" font-size="7" fill="#222" text-anchor="end" transform="rotate(-60 1164.41 540.20)">24.06.2022</text><text x="1173.57" y="540.20" font-size="7" fill="#222" text-anchor="end" transform="rotate(-60 1173.57 540.20)">27.06.2022</text><text x="1182.73" y="540.20" font-size="7" fill="#222" text-anchor="end" transform="rotate(-60 1182.73 540.20)">30.06.2022</text><text x="1191.89" y="540.20" font-size="7" fill="#222" text-anchor="end" transform="rotate(-60 1191.89 540.20)">03.07.2022</text><text x="1201.05" y="540.20" font-size="7" fill="#222" text-anchor="end" transform="rotate(-60 1201.05 540.20)">06.07.2022</text><text x="1210.22" y="540.20" font-size="7" fill="#222" text-anchor="end" transform="rotate(-60 1210.22 540.20)">09.07.2022</text><text x="1219.38" y="540.20" font-size="7" fill="#222" text-anchor="end" transform="rotate(-60 1219.38 540.20)">12.07.2022</text><text x="1228.54" y="540.20" font-size="7" fill="#222" text-anchor="end" transform="rotate(-60 1228.54 540.20)">15.07.2022</text><text x="1237.70" y="540.20" font-size="7" fill="#222" text-anchor="end" transform="rotate(-60 1237.70 540.20)">18.07.2022</text><text x="1246.86" y="540.20" font-size="7" fill="#222" text-anchor="end" transform="rotate(-60 1246.86 540.20)">21.07.2022</text><text x="1256.02" y="540.20" font-size="7" fill="#222" text-anchor="end" transform="rotate(-60 1256.02 540.20)">24.07.2022</text><text x="1265.19" y="540.20" font-size="7" fill="#222" text-anchor="end" transform="rotate(-60 1265.19 540.20)">27.07.2022</text><text x="1274.35" y="540.20" font-size="7" fill="#222" text-anchor="end" transform="rotate(-60 1274.35 540.20)">30.07.2022</text><text x="1283.51" y="540.20" font-size="7" fill="#222" text-anchor="end" transform="rotate(-60 1283.51 540.20)">02.08.2022</text><text x="1292.67" y="540.20" font-size="7" fill="#222" text-anchor="end" transform="rotate(-60 1292.67 540.20)">05.08.2022</text><text x="1301.83" y="540.20" font-size="7" fill="#222" text-anchor="end" transform="rotate(-60 1301.83 540.20)">08.08.2022</text><text x="1310.99" y="540.20" font-size="7" fill="#222" text-anchor="end" transform="rotate(-60 1310.99 540.20)">11.08.2022</text><text x="1320.16" y="540.20" font-size="7" fill="#222" text-anchor="end" transform="rotate(-60 1320.16 540.20)">14.08.2022</text><text x="1329.32" y="540.20" font-size="7" fill="#222" text-anchor="end" transform="rotate(-60 1329.32 540.20)">17.08.2022</text><text x="1338.48" y="540.20" font-size="7" fill="#222" text-anchor="end" transform="rotate(-60 1338.48 540.20)">20.08.2022</text><text x="1347.64" y="540.20" font-size="7" fill="#222" text-anchor="end" transform="rotate(-60 1347.64 540.20)">23.08.2022</text><text x="1356.80" y="540.20" font-size="7" fill="#222" text-anchor="end" transform="rotate(-60 1356.80 540.20)">26.08.2022</text><text x="1365.97" y="540.20" font-size="7" fill="#222" text-anchor="end" transform="rotate(-60 1365.97 540.20)">29.08.2022</text><text x="1135.38" y="586.00" font-size="7" fill="#222" text-anchor="middle">Дата</text></svg><div style="position:absolute;left:851px;top:605px;width:600px;height:295px;background:#fff;border:1px solid rgba(60,64,67,0.32);border-right:none"></div><svg style="position:absolute;left:0;top:0;will-change:transform" width="1440" height="720" viewBox="0 0 1440 720" font-family="Liberation Sans, sans-serif"><text x="865.4" y="628.40" font-size="12" fill="#757575">Клики по рекламе и переходы в маркетплейсы в разрезе по дням</text><rect x="1075.00" y="642.00" width="7" height="2.2" fill="#e06666"/><text x="1086.90" y="645.10" font-size="7.2" fill="#222">Клики</text><rect x="1116.90" y="642.00" width="7" height="2.2" fill="#6aa84f"/><text x="1128.50" y="645.10" font-size="7.2" fill="#222">Переходы в маркетплейсы</text><line x1="905.50" x2="1395.00" y1="658.50" y2="658.50" stroke="#d9d9d9" stroke-width="1"/><line x1="902.00" x2="909.00" y1="658.50" y2="658.50" stroke="#333" stroke-width="1"/><line x1="905.50" x2="1395.00" y1="686.50" y2="686.50" stroke="#d9d9d9" stroke-width="1"/><line x1="902.00" x2="909.00" y1="686.50" y2="686.50" stroke="#333" stroke-width="1"/><line x1="905.50" x2="1395.00" y1="714.50" y2="714.50" stroke="#d9d9d9" stroke-width="1"/><line x1="902.00" x2="909.00" y1="714.50" y2="714.50" stroke="#333" stroke-width="1"/><line x1="905.50" x2="1395.00" y1="742.50" y2="742.50" stroke="#d9d9d9" stroke-width="1"/><line x1="902.00" x2="909.00" y1="742.50" y2="742.50" stroke="#333" stroke-width="1"/><line x1="905.50" x2="1395.00" y1="770.50" y2="770.50" stroke="#d9d9d9" stroke-width="1"/><line x1="902.00" x2="909.00" y1="770.50" y2="770.50" stroke="#333" stroke-width="1"/><line x1="905.50" x2="905.50" y1="658.20" y2="798.40" stroke="#333" stroke-width="1"/><path d="M907.10,798.40C908.17,798.40 909.23,798.40 910.30,798.40C911.37,798.40 912.43,798.40 913.50,798.40C914.56,798.40 915.63,798.40 916.70,798.40C917.76,798.40 918.83,798.40 919.90,798.40C920.96,798.40 922.03,798.40 923.10,798.40C924.16,798.40 925.23,798.40 926.30,798.40C927.36,798.40 928.43,798.40 929.50,798.40C930.56,798.40 931.63,798.40 932.69,798.40C933.76,798.40 934.83,798.40 935.89,798.40C936.96,798.40 938.03,798.40 939.09,798.40C940.16,798.40 941.23,798.23 942.29,797.95C943.36,797.67 944.43,791.38 945.49,790.23C946.56,789.07 947.62,788.37 948.69,787.99C949.76,787.60 950.82,787.20 951.89,787.20C952.96,787.20 954.02,793.14 955.09,793.14C956.16,793.14 957.22,790.65 958.29,788.43C959.36,786.21 960.42,777.23 961.49,777.01C962.56,776.79 963.62,776.68 964.69,776.68C965.75,776.68 966.82,781.27 967.89,781.27C968.95,781.27 970.02,781.04 971.09,781.04C972.15,781.04 973.22,784.18 974.29,784.18C975.35,784.18 976.42,781.83 977.49,781.83C978.55,781.83 979.62,784.96 980.68,784.96C981.75,784.96 982.82,782.03 983.88,781.60C984.95,781.18 986.02,780.82 987.08,780.82C988.15,780.82 989.22,781.71 990.28,781.71C991.35,781.71 992.42,777.46 993.48,777.46C994.55,777.46 995.61,779.48 996.68,780.71C997.75,781.93 998.81,784.96 999.88,784.96C1000.95,784.96 1002.01,784.38 1003.08,783.73C1004.15,783.08 1005.21,778.92 1006.28,778.92C1007.35,778.92 1008.41,786.08 1009.48,786.08C1010.55,786.08 1011.61,781.71 1012.68,781.71C1013.74,781.71 1014.81,783.95 1015.88,783.95C1016.94,783.95 1018.01,779.25 1019.08,779.25C1020.14,779.25 1021.21,782.16 1022.28,782.16C1023.34,782.16 1024.41,778.50 1025.48,777.91C1026.54,777.32 1027.61,777.49 1028.67,776.79C1029.74,776.08 1030.81,765.56 1031.87,756.52C1032.94,747.48 1034.01,715.53 1035.07,715.53C1036.14,715.53 1037.21,744.83 1038.27,746.66C1039.34,748.50 1040.41,748.08 1041.47,749.69C1042.54,751.30 1043.61,761.67 1044.67,761.67C1045.74,761.67 1046.80,758.89 1047.87,756.63C1048.94,754.37 1050.00,746.22 1051.07,746.22C1052.14,746.22 1053.20,747.45 1054.27,747.45C1055.34,747.45 1056.40,744.93 1057.47,744.93C1058.54,744.93 1059.60,746.99 1060.67,748.02C1061.73,749.05 1062.80,750.08 1063.87,751.11C1064.93,752.14 1066.00,752.58 1067.07,754.19C1068.13,755.81 1069.20,765.51 1070.27,765.51C1071.33,765.51 1072.40,698.64 1073.47,698.64C1074.53,698.64 1075.60,705.19 1076.67,708.93C1077.73,712.67 1078.80,718.85 1079.86,721.27C1080.93,723.69 1082.00,726.42 1083.06,726.42C1084.13,726.42 1085.20,721.76 1086.26,718.19C1087.33,714.61 1088.40,702.75 1089.46,702.75C1090.53,702.75 1091.60,725.39 1092.66,725.39C1093.73,725.39 1094.79,690.41 1095.86,690.41C1096.93,690.41 1097.99,711.97 1099.06,716.13C1100.13,720.29 1101.19,724.36 1102.26,724.36C1103.33,724.36 1104.39,677.03 1105.46,677.03C1106.53,677.03 1107.59,708.75 1108.66,716.13C1109.72,723.50 1110.79,731.56 1111.86,731.56C1112.92,731.56 1113.99,719.15 1115.06,712.01C1116.12,704.88 1117.19,688.35 1118.26,688.35C1119.32,688.35 1120.39,716.80 1121.46,720.24C1122.52,723.69 1123.59,726.42 1124.66,726.42C1125.72,726.42 1126.79,726.42 1127.85,726.42C1128.92,726.42 1129.99,695.55 1131.05,695.55C1132.12,695.55 1133.19,750.31 1134.25,763.45C1135.32,776.60 1136.39,791.23 1137.45,791.23C1138.52,791.23 1139.59,790.86 1140.65,790.20C1141.72,789.54 1142.78,772.45 1143.85,761.40C1144.92,750.34 1145.98,722.30 1147.05,722.30C1148.12,722.30 1149.18,746.99 1150.25,746.99C1151.32,746.99 1152.38,746.03 1153.45,744.93C1154.52,743.84 1155.58,739.06 1156.65,736.70C1157.72,734.35 1158.78,732.18 1159.85,730.53C1160.91,728.89 1161.98,726.42 1163.05,726.42C1164.11,726.42 1165.18,733.62 1166.25,733.62C1167.31,733.62 1168.38,721.91 1169.45,721.27C1170.51,720.64 1171.58,720.24 1172.65,720.24C1173.71,720.24 1174.78,736.56 1175.84,740.82C1176.91,745.08 1177.98,750.08 1179.04,750.08C1180.11,750.08 1181.18,749.70 1182.24,749.05C1183.31,748.40 1184.38,736.81 1185.44,732.59C1186.51,728.37 1187.58,722.30 1188.64,722.30C1189.71,722.30 1190.78,722.30 1191.84,722.30C1192.91,722.30 1193.97,731.26 1195.04,734.65C1196.11,738.04 1197.17,743.29 1198.24,743.29C1199.31,743.29 1200.37,735.68 1201.44,735.68C1202.51,735.68 1203.57,740.82 1204.64,740.82C1205.71,740.82 1206.77,701.31 1207.84,701.31C1208.90,701.31 1209.97,756.25 1211.04,756.25C1212.10,756.25 1213.17,703.78 1214.24,703.78C1215.30,703.78 1216.37,731.82 1217.44,742.88C1218.50,753.93 1219.57,771.68 1220.64,771.68C1221.70,771.68 1222.77,765.62 1223.83,761.40C1224.90,757.18 1225.97,744.93 1227.03,744.93C1228.10,744.93 1229.17,767.27 1230.23,769.63C1231.30,771.98 1232.37,771.55 1233.43,773.74C1234.50,775.94 1235.57,790.20 1236.63,790.20C1237.70,790.20 1238.77,768.60 1239.83,768.60C1240.90,768.60 1241.96,777.86 1243.03,777.86C1244.10,777.86 1245.16,774.92 1246.23,773.74C1247.30,772.57 1248.36,772.15 1249.43,770.66C1250.50,769.16 1251.56,762.42 1252.63,762.42C1253.70,762.42 1254.76,773.74 1255.83,773.74C1256.89,773.74 1257.96,771.75 1259.03,770.66C1260.09,769.56 1261.16,767.16 1262.23,767.16C1263.29,767.16 1264.36,773.15 1265.43,773.74C1266.49,774.33 1267.56,774.77 1268.63,774.77C1269.69,774.77 1270.76,768.60 1271.83,768.60C1272.89,768.60 1273.96,778.89 1275.02,778.89C1276.09,778.89 1277.16,764.48 1278.22,764.48C1279.29,764.48 1280.36,766.77 1281.42,768.60C1282.49,770.43 1283.56,776.83 1284.62,776.83C1285.69,776.83 1286.76,776.42 1287.82,775.80C1288.89,775.18 1289.95,766.54 1291.02,766.54C1292.09,766.54 1293.15,766.54 1294.22,766.54C1295.29,766.54 1296.35,788.14 1297.42,788.14C1298.49,788.14 1299.55,750.08 1300.62,750.08C1301.69,750.08 1302.75,781.97 1303.82,781.97C1304.89,781.97 1305.95,766.54 1307.02,766.54C1308.08,766.54 1309.15,772.71 1310.22,772.71C1311.28,772.71 1312.35,772.14 1313.42,771.68C1314.48,771.23 1315.55,770.08 1316.62,769.63C1317.68,769.17 1318.75,768.60 1319.82,768.60C1320.88,768.60 1321.95,778.89 1323.01,778.89C1324.08,778.89 1325.15,757.28 1326.21,757.28C1327.28,757.28 1328.35,778.27 1329.41,778.27C1330.48,778.27 1331.55,767.17 1332.61,765.51C1333.68,763.85 1334.75,762.42 1335.81,762.42C1336.88,762.42 1337.94,769.63 1339.01,769.63C1340.08,769.63 1341.14,757.69 1342.21,757.69C1343.28,757.69 1344.34,769.21 1345.41,769.21C1346.48,769.21 1347.54,754.84 1348.61,754.19C1349.68,753.55 1350.74,753.17 1351.81,753.17C1352.88,753.17 1353.94,765.35 1355.01,766.54C1356.07,767.73 1357.14,768.60 1358.21,768.60C1359.27,768.60 1360.34,758.31 1361.41,758.31C1362.47,758.31 1363.54,764.48 1364.61,764.48C1365.67,764.48 1366.74,761.40 1367.81,761.40C1368.87,761.40 1369.94,769.63 1371.00,769.63C1372.07,769.63 1373.14,768.70 1374.20,768.19C1375.27,767.67 1376.34,767.15 1377.40,766.54C1378.47,765.93 1379.54,764.48 1380.60,764.48C1381.67,764.48 1382.74,769.36 1383.80,773.74C1384.87,778.12 1385.94,796.38 1387.00,796.38C1388.07,796.38 1389.13,785.97 1390.20,781.97C1391.27,777.97 1392.33,775.11 1393.40,771.68" fill="none" stroke="#e06666" stroke-width="1.3" stroke-linejoin="round"/><path d="M907.10,725.00C908.17,725.00 909.23,725.00 910.30,725.00C911.37,725.00 912.43,725.00 913.50,725.00C914.56,725.00 915.63,725.00 916.70,725.00C917.76,725.00 918.83,725.00 919.90,725.00C920.96,725.00 922.03,725.00 923.10,725.00C924.16,725.00 925.23,725.00 926.30,725.00C927.36,725.00 928.43,725.00 929.50,725.00C930.56,725.00 931.63,725.00 932.69,725.00C933.76,725.00 934.83,725.00 935.89,725.00C936.96,725.00 938.03,725.00 939.09,725.00C940.16,725.00 941.23,725.00 942.29,725.00C943.36,725.00 944.43,725.00 945.49,725.00C946.56,725.00 947.62,725.00 948.69,725.00C949.76,725.00 950.82,725.00 951.89,725.00C952.96,725.00 954.02,725.00 955.09,725.00C956.16,725.00 957.22,725.00 958.29,725.00C959.36,725.00 960.42,725.00 961.49,725.00C962.56,725.00 963.62,725.00 964.69,725.00C965.75,725.00 966.82,725.00 967.89,725.00C968.95,725.00 970.02,725.00 971.09,725.00C972.15,725.00 973.22,725.00 974.29,725.00C975.35,725.00 976.42,725.00 977.49,725.00C978.55,725.00 979.62,725.00 980.68,725.00C981.75,725.00 982.82,725.00 983.88,725.00C984.95,725.00 986.02,725.00 987.08,725.00C988.15,725.00 989.22,725.00 990.28,725.00C991.35,725.00 992.42,725.00 993.48,725.00C994.55,725.00 995.61,725.00 996.68,725.00C997.75,725.00 998.81,725.00 999.88,725.00C1000.95,725.00 1002.01,725.00 1003.08,725.00C1004.15,725.00 1005.21,725.00 1006.28,725.00C1007.35,725.00 1008.41,725.00 1009.48,725.00C1010.55,725.00 1011.61,725.00 1012.68,725.00C1013.74,725.00 1014.81,725.00 1015.88,725.00C1016.94,725.00 1018.01,725.00 1019.08,725.00C1020.14,725.00 1021.21,725.00 1022.28,725.00C1023.34,725.00 1024.41,725.00 1025.48,725.00C1026.54,725.00 1027.61,725.00 1028.67,725.00C1029.74,725.00 1030.81,725.00 1031.87,725.00C1032.94,725.00 1034.01,725.00 1035.07,725.00C1036.14,725.00 1037.21,725.00 1038.27,725.00C1039.34,725.00 1040.41,725.00 1041.47,725.00C1042.54,725.00 1043.61,725.00 1044.67,725.00C1045.74,725.00 1046.80,725.00 1047.87,725.00C1048.94,725.00 1050.00,725.00 1051.07,725.00C1052.14,725.00 1053.20,725.00 1054.27,725.00C1055.34,725.00 1056.40,725.00 1057.47,725.00C1058.54,725.00 1059.60,725.00 1060.67,725.00C1061.73,725.00 1062.80,725.00 1063.87,725.00C1064.93,725.00 1066.00,725.00 1067.07,725.00C1068.13,725.00 1069.20,725.00 1070.27,725.00C1071.33,725.00 1072.40,725.00 1073.47,725.00C1074.53,725.00 1075.60,725.00 1076.67,725.00C1077.73,725.00 1078.80,725.00 1079.86,725.00C1080.93,725.00 1082.00,725.00 1083.06,725.00C1084.13,725.00 1085.20,725.00 1086.26,725.00C1087.33,725.00 1088.40,725.00 1089.46,725.00C1090.53,725.00 1091.60,725.00 1092.66,725.00C1093.73,725.00 1094.79,725.00 1095.86,725.00C1096.93,725.00 1097.99,725.00 1099.06,725.00C1100.13,725.00 1101.19,725.00 1102.26,725.00C1103.33,725.00 1104.39,725.00 1105.46,725.00C1106.53,725.00 1107.59,725.00 1108.66,725.00C1109.72,725.00 1110.79,725.00 1111.86,725.00C1112.92,725.00 1113.99,725.00 1115.06,725.00C1116.12,725.00 1117.19,725.00 1118.26,725.00C1119.32,725.00 1120.39,725.00 1121.46,725.00C1122.52,725.00 1123.59,725.00 1124.66,725.00C1125.72,725.00 1126.79,725.00 1127.85,725.00C1128.92,725.00 1129.99,725.00 1131.05,725.00C1132.12,725.00 1133.19,725.00 1134.25,725.00C1135.32,725.00 1136.39,725.00 1137.45,725.00C1138.52,725.00 1139.59,725.00 1140.65,725.00C1141.72,725.00 1142.78,725.00 1143.85,725.00C1144.92,725.00 1145.98,725.00 1147.05,725.00C1148.12,725.00 1149.18,725.00 1150.25,725.00C1151.32,725.00 1152.38,725.00 1153.45,725.00C1154.52,725.00 1155.58,725.00 1156.65,725.00C1157.72,725.00 1158.78,725.00 1159.85,725.00C1160.91,725.00 1161.98,725.00 1163.05,725.00C1164.11,725.00 1165.18,725.00 1166.25,725.00C1167.31,725.00 1168.38,725.00 1169.45,725.00C1170.51,725.00 1171.58,725.00 1172.65,725.00C1173.71,725.00 1174.78,725.00 1175.84,725.00C1176.91,725.00 1177.98,725.00 1179.04,725.00C1180.11,725.00 1181.18,725.00 1182.24,725.00C1183.31,725.00 1184.38,725.00 1185.44,725.00C1186.51,725.00 1187.58,725.00 1188.64,725.00C1189.71,725.00 1190.78,725.00 1191.84,725.00C1192.91,725.00 1193.97,725.00 1195.04,725.00C1196.11,725.00 1197.17,725.00 1198.24,725.00C1199.31,725.00 1200.37,725.00 1201.44,725.00C1202.51,725.00 1203.57,725.00 1204.64,725.00C1205.71,725.00 1206.77,725.00 1207.84,725.00C1208.90,725.00 1209.97,725.00 1211.04,725.00C1212.10,725.00 1213.17,725.00 1214.24,725.00C1215.30,725.00 1216.37,725.00 1217.44,725.00C1218.50,725.00 1219.57,725.00 1220.64,725.00C1221.70,725.00 1222.77,725.00 1223.83,725.00C1224.90,725.00 1225.97,725.00 1227.03,725.00C1228.10,725.00 1229.17,725.00 1230.23,725.00C1231.30,725.00 1232.37,725.00 1233.43,725.00C1234.50,725.00 1235.57,725.00 1236.63,725.00C1237.70,725.00 1238.77,725.00 1239.83,725.00C1240.90,725.00 1241.96,725.00 1243.03,725.00C1244.10,725.00 1245.16,725.00 1246.23,725.00C1247.30,725.00 1248.36,725.00 1249.43,725.00C1250.50,725.00 1251.56,695.50 1252.63,695.50C1253.70,695.50 1254.76,725.00 1255.83,725.00C1256.89,725.00 1257.96,725.00 1259.03,725.00C1260.09,725.00 1261.16,725.00 1262.23,725.00C1263.29,725.00 1264.36,725.00 1265.43,725.00C1266.49,725.00 1267.56,725.00 1268.63,725.00C1269.69,725.00 1270.76,725.00 1271.83,725.00C1272.89,725.00 1273.96,725.00 1275.02,725.00C1276.09,725.00 1277.16,680.50 1278.22,680.50C1279.29,680.50 1280.36,725.00 1281.42,725.00C1282.49,725.00 1283.56,725.00 1284.62,725.00C1285.69,725.00 1286.76,725.00 1287.82,725.00C1288.89,725.00 1289.95,725.00 1291.02,725.00C1292.09,725.00 1293.15,725.00 1294.22,725.00C1295.29,725.00 1296.35,725.00 1297.42,725.00C1298.49,725.00 1299.55,682.00 1300.62,682.00C1301.69,682.00 1302.75,725.00 1303.82,725.00C1304.89,725.00 1305.95,725.00 1307.02,725.00C1308.08,725.00 1309.15,725.00 1310.22,725.00C1311.28,725.00 1312.35,725.00 1313.42,725.00C1314.48,725.00 1315.55,725.00 1316.62,725.00C1317.68,725.00 1318.75,690.70 1319.82,690.70C1320.88,690.70 1321.95,725.00 1323.01,725.00C1324.08,725.00 1325.15,667.50 1326.21,667.50C1327.28,667.50 1328.35,725.00 1329.41,725.00C1330.48,725.00 1331.55,725.00 1332.61,725.00C1333.68,725.00 1334.75,686.00 1335.81,686.00C1336.88,686.00 1337.94,691.00 1339.01,691.00C1340.08,691.00 1341.14,688.00 1342.21,688.00C1343.28,688.00 1344.34,725.00 1345.41,725.00C1346.48,725.00 1347.54,707.00 1348.61,707.00C1349.68,707.00 1350.74,725.00 1351.81,725.00C1352.88,725.00 1353.94,725.00 1355.01,725.00C1356.07,725.00 1357.14,725.00 1358.21,725.00C1359.27,725.00 1360.34,677.40 1361.41,677.40C1362.47,677.40 1363.54,725.00 1364.61,725.00C1365.67,725.00 1366.74,725.00 1367.81,725.00C1368.87,725.00 1369.94,725.00 1371.00,725.00C1372.07,725.00 1373.14,725.00 1374.20,725.00C1375.27,725.00 1376.34,694.30 1377.40,694.30C1378.47,694.30 1379.54,699.10 1380.60,702.00C1381.67,704.90 1382.74,708.23 1383.80,712.00C1384.87,715.77 1385.94,725.00 1387.00,725.00C1388.07,725.00 1389.13,725.00 1390.20,725.00C1391.27,725.00 1392.33,725.00 1393.40,725.00" fill="none" stroke="#6aa84f" stroke-width="1.3" stroke-linejoin="round"/><line x1="902.00" x2="1395.00" y1="798.50" y2="798.50" stroke="#666" stroke-width="1"/><text x="911.70" y="805.40" font-size="7" fill="#222" text-anchor="end" transform="rotate(-60 911.70 805.40)">01.04.2022</text><text x="921.30" y="805.40" font-size="7" fill="#222" text-anchor="end" transform="rotate(-60 921.30 805.40)">04.04.2022</text><text x="930.90" y="805.40" font-size="7" fill="#222" text-anchor="end" transform="rotate(-60 930.90 805.40)">07.04.2022</text><text x="940.49" y="805.40" font-size="7" fill="#222" text-anchor="end" transform="rotate(-60 940.49 805.40)">10.04.2022</text><text x="950.09" y="805.40" font-size="7" fill="#222" text-anchor="end" transform="rotate(-60 950.09 805.40)">13.04.2022</text><text x="959.69" y="805.40" font-size="7" fill="#222" text-anchor="end" transform="rotate(-60 959.69 805.40)">16.04.2022</text><text x="969.29" y="805.40" font-size="7" fill="#222" text-anchor="end" transform="rotate(-60 969.29 805.40)">19.04.2022</text><text x="978.89" y="805.40" font-size="7" fill="#222" text-anchor="end" transform="rotate(-60 978.89 805.40)">22.04.2022</text><text x="988.48" y="805.40" font-size="7" fill="#222" text-anchor="end" transform="rotate(-60 988.48 805.40)">25.04.2022</text><text x="998.08" y="805.40" font-size="7" fill="#222" text-anchor="end" transform="rotate(-60 998.08 805.40)">28.04.2022</text><text x="1007.68" y="805.40" font-size="7" fill="#222" text-anchor="end" transform="rotate(-60 1007.68 805.40)">01.05.2022</text><text x="1017.28" y="805.40" font-size="7" fill="#222" text-anchor="end" transform="rotate(-60 1017.28 805.40)">04.05.2022</text><text x="1026.88" y="805.40" font-size="7" fill="#222" text-anchor="end" transform="rotate(-60 1026.88 805.40)">07.05.2022</text><text x="1036.47" y="805.40" font-size="7" fill="#222" text-anchor="end" transform="rotate(-60 1036.47 805.40)">10.05.2022</text><text x="1046.07" y="805.40" font-size="7" fill="#222" text-anchor="end" transform="rotate(-60 1046.07 805.40)">13.05.2022</text><text x="1055.67" y="805.40" font-size="7" fill="#222" text-anchor="end" transform="rotate(-60 1055.67 805.40)">16.05.2022</text><text x="1065.27" y="805.40" font-size="7" fill="#222" text-anchor="end" transform="rotate(-60 1065.27 805.40)">19.05.2022</text><text x="1074.87" y="805.40" font-size="7" fill="#222" text-anchor="end" transform="rotate(-60 1074.87 805.40)">22.05.2022</text><text x="1084.46" y="805.40" font-size="7" fill="#222" text-anchor="end" transform="rotate(-60 1084.46 805.40)">25.05.2022</text><text x="1094.06" y="805.40" font-size="7" fill="#222" text-anchor="end" transform="rotate(-60 1094.06 805.40)">28.05.2022</text><text x="1103.66" y="805.40" font-size="7" fill="#222" text-anchor="end" transform="rotate(-60 1103.66 805.40)">31.05.2022</text><text x="1113.26" y="805.40" font-size="7" fill="#222" text-anchor="end" transform="rotate(-60 1113.26 805.40)">03.06.2022</text><text x="1122.86" y="805.40" font-size="7" fill="#222" text-anchor="end" transform="rotate(-60 1122.86 805.40)">06.06.2022</text><text x="1132.45" y="805.40" font-size="7" fill="#222" text-anchor="end" transform="rotate(-60 1132.45 805.40)">09.06.2022</text><text x="1142.05" y="805.40" font-size="7" fill="#222" text-anchor="end" transform="rotate(-60 1142.05 805.40)">12.06.2022</text><text x="1151.65" y="805.40" font-size="7" fill="#222" text-anchor="end" transform="rotate(-60 1151.65 805.40)">15.06.2022</text><text x="1161.25" y="805.40" font-size="7" fill="#222" text-anchor="end" transform="rotate(-60 1161.25 805.40)">18.06.2022</text><text x="1170.85" y="805.40" font-size="7" fill="#222" text-anchor="end" transform="rotate(-60 1170.85 805.40)">21.06.2022</text><text x="1180.44" y="805.40" font-size="7" fill="#222" text-anchor="end" transform="rotate(-60 1180.44 805.40)">24.06.2022</text><text x="1190.04" y="805.40" font-size="7" fill="#222" text-anchor="end" transform="rotate(-60 1190.04 805.40)">27.06.2022</text><text x="1199.64" y="805.40" font-size="7" fill="#222" text-anchor="end" transform="rotate(-60 1199.64 805.40)">30.06.2022</text><text x="1209.24" y="805.40" font-size="7" fill="#222" text-anchor="end" transform="rotate(-60 1209.24 805.40)">03.07.2022</text><text x="1218.84" y="805.40" font-size="7" fill="#222" text-anchor="end" transform="rotate(-60 1218.84 805.40)">06.07.2022</text><text x="1228.43" y="805.40" font-size="7" fill="#222" text-anchor="end" transform="rotate(-60 1228.43 805.40)">09.07.2022</text><text x="1238.03" y="805.40" font-size="7" fill="#222" text-anchor="end" transform="rotate(-60 1238.03 805.40)">12.07.2022</text><text x="1247.63" y="805.40" font-size="7" fill="#222" text-anchor="end" transform="rotate(-60 1247.63 805.40)">15.07.2022</text><text x="1257.23" y="805.40" font-size="7" fill="#222" text-anchor="end" transform="rotate(-60 1257.23 805.40)">18.07.2022</text><text x="1266.83" y="805.40" font-size="7" fill="#222" text-anchor="end" transform="rotate(-60 1266.83 805.40)">21.07.2022</text><text x="1276.43" y="805.40" font-size="7" fill="#222" text-anchor="end" transform="rotate(-60 1276.43 805.40)">24.07.2022</text><text x="1286.02" y="805.40" font-size="7" fill="#222" text-anchor="end" transform="rotate(-60 1286.02 805.40)">27.07.2022</text><text x="1295.62" y="805.40" font-size="7" fill="#222" text-anchor="end" transform="rotate(-60 1295.62 805.40)">30.07.2022</text><text x="1305.22" y="805.40" font-size="7" fill="#222" text-anchor="end" transform="rotate(-60 1305.22 805.40)">02.08.2022</text><text x="1314.82" y="805.40" font-size="7" fill="#222" text-anchor="end" transform="rotate(-60 1314.82 805.40)">05.08.2022</text><text x="1324.42" y="805.40" font-size="7" fill="#222" text-anchor="end" transform="rotate(-60 1324.42 805.40)">08.08.2022</text><text x="1334.01" y="805.40" font-size="7" fill="#222" text-anchor="end" transform="rotate(-60 1334.01 805.40)">11.08.2022</text><text x="1343.61" y="805.40" font-size="7" fill="#222" text-anchor="end" transform="rotate(-60 1343.61 805.40)">14.08.2022</text><text x="1353.21" y="805.40" font-size="7" fill="#222" text-anchor="end" transform="rotate(-60 1353.21 805.40)">17.08.2022</text><text x="1362.81" y="805.40" font-size="7" fill="#222" text-anchor="end" transform="rotate(-60 1362.81 805.40)">20.08.2022</text><text x="1372.41" y="805.40" font-size="7" fill="#222" text-anchor="end" transform="rotate(-60 1372.41 805.40)">23.08.2022</text><text x="1382.00" y="805.40" font-size="7" fill="#222" text-anchor="end" transform="rotate(-60 1382.00 805.40)">26.08.2022</text><text x="1391.60" y="805.40" font-size="7" fill="#222" text-anchor="end" transform="rotate(-60 1391.60 805.40)">29.08.2022</text><text x="1150.25" y="851.20" font-size="7" fill="#222" text-anchor="middle">Дата</text></svg><div style="position:absolute;left:0px;top:709px;width:1440px;height:11px;background:#fff"></div>
</body></html>
